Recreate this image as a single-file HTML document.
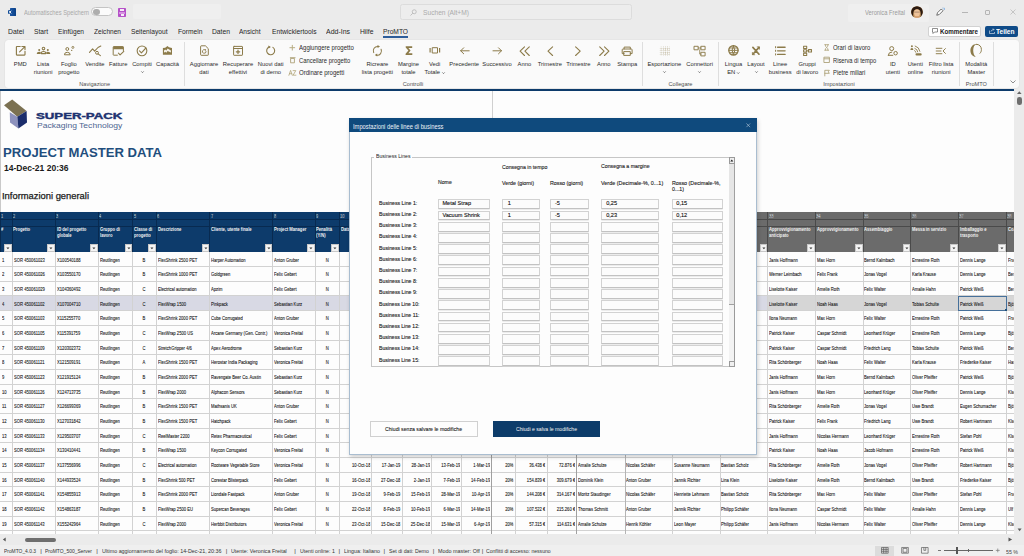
<!DOCTYPE html><html><head><meta charset="utf-8"><style>
*{margin:0;padding:0;box-sizing:border-box}
html,body{width:1024px;height:556px;overflow:hidden;background:#ebebeb}
body{font-family:"Liberation Sans",sans-serif;position:relative;color:#333}
.a{position:absolute}
.t{position:absolute;white-space:nowrap;line-height:1}
.rl{position:absolute;white-space:nowrap;line-height:1;font-size:5.8px;color:#2a2a2a;text-align:center;transform:translateX(-50%)}
.gl{position:absolute;white-space:nowrap;line-height:1;font-size:5.6px;color:#4e4e4e;transform:translateX(-50%)}
.sep{position:absolute;width:1px;background:#dedede;top:42px;height:44px}
svg{position:absolute;overflow:visible}
.c{position:absolute;white-space:nowrap;overflow:hidden;line-height:1.4;height:8px;margin-top:-1px;font-size:5.2px;color:#1a1a1a;-webkit-text-stroke:0.1px #1a1a1a;transform-origin:0 0;transform:scaleX(0.8)}
.hl{position:absolute;white-space:nowrap;overflow:hidden;line-height:1.4;height:8px;margin-top:-1px;font-size:4.9px;color:#f2f2f2;font-weight:bold;transform-origin:0 0;transform:scaleX(0.85)}
</style></head><body><div class="a" style="left:0;top:0;width:1024px;height:40px;background:#ebebeb"></div><div class="a" style="left:9.6px;top:7.9px;width:6.4px;height:8.1px;background:linear-gradient(90deg,#1a56a6,#124a94 60%,#0b3f83);border-radius:0.6px"></div><div class="a" style="left:7.9px;top:9.6px;width:4.6px;height:4.9px;background:#0f4a95;border-radius:0.4px"></div><svg style="left:0;top:0" width="20" height="20"><path d="M9.1 10.7L11.2 13.5M11.2 10.7L9.1 13.5" stroke="#f2f5fa" stroke-width="1.0"/></svg><div class="t fit" style="left:24px;top:9.6px;font-size:6.6px;color:#a8a8a8;transform:scaleX(0.8692);transform-origin:0 0;">Automatisches Speichern</div><div class="a" style="left:91.4px;top:7.3px;width:21.2px;height:9.2px;border:0.8px solid #c4c4c4;border-radius:4.6px;background:#fbfbfb"></div><div class="a" style="left:93.3px;top:8.5px;width:6.6px;height:6.6px;border-radius:50%;background:#adadad"></div><div class="a" style="left:118.1px;top:7.9px;width:8.4px;height:8.8px;background:#b551c8;border-radius:0.8px"></div><div class="a" style="left:120.4px;top:8.9px;width:3.7px;height:1.9px;background:#f6ecf8"></div><div class="a" style="left:119.1px;top:11.6px;width:5.8px;height:2px;background:#d592e0"></div><div class="a" style="left:120.8px;top:13.6px;width:2.9px;height:2.1px;background:#f6ecf8"></div><div class="a" style="left:132.5px;top:3.8px;width:88.5px;height:15px;background:#efefef;border-radius:2px"></div><div class="a" style="left:400px;top:4px;width:232px;height:15.5px;background:#ededed;border:0.8px solid #dcdcdc;border-radius:2.5px"></div><svg style="left:410px;top:9px" width="7" height="7" viewBox="0 0 14 14"><circle cx="8.5" cy="5.5" r="4" fill="none" stroke="#a5a5a5" stroke-width="1.2"/><path d="M5.5 8.5L1 13" stroke="#a5a5a5" stroke-width="1.3"/></svg><div class="t fit" style="left:423px;top:9.5px;font-size:6.6px;color:#ababab;transform:scaleX(1.0079);transform-origin:0 0;">Suchen (Alt+M)</div><div class="a" style="left:848px;top:4px;width:81px;height:17.5px;background:#efefef;border-radius:2px"></div><div class="t fit" style="left:865px;top:9.9px;font-size:6.3px;color:#9a9a9a;transform:scaleX(0.9143);transform-origin:0 0;">Veronica Freital</div><svg style="left:911px;top:6px" width="12" height="12" viewBox="0 0 12 12"><defs><clipPath id="av"><circle cx="6" cy="6" r="5.85"/></clipPath></defs><g clip-path="url(#av)"><rect width="12" height="12" fill="#c89a62"/><path d="M0 12V5C0 1.5 3 0 6 0S12 1.5 12 5V12H9.5C10 9 9.8 6 9 4.5 8 3 4 3 3 4.5 2.2 6 2 9 2.5 12Z" fill="#2b1a10"/><ellipse cx="6" cy="6.9" rx="2.9" ry="3.7" fill="#eec39a"/><path d="M3.3 6.1H8.7" stroke="#6a5040" stroke-width="0.5"/><path d="M2 12C3 10.5 4.5 10.3 6 10.3S9 10.5 10 12Z" fill="#d9a070"/></g></svg><svg style="left:935px;top:7px" width="10" height="10" viewBox="0 0 20 20"><path d="M3.5 16.5l1.5-5 7.5-7.5 3.5 3.5-7.5 7.5z" fill="#fff" stroke="#444" stroke-width="1.5" stroke-linejoin="round"/><circle cx="16" cy="2.2" r="1" fill="#5a9be0"/><circle cx="18.6" cy="2.4" r="1" fill="#5a9be0"/><circle cx="18.4" cy="5" r="1" fill="#5a9be0"/></svg><div class="a" style="left:962px;top:11.8px;width:5.5px;height:0.8px;background:#b5b5b5"></div><div class="a" style="left:985px;top:9.5px;width:5px;height:5px;border:0.8px solid #b5b5b5;border-radius:1px"></div><svg style="left:1010px;top:9.2px" width="6" height="6" viewBox="0 0 12 12"><path d="M1 1L11 11M11 1L1 11" stroke="#b0b0b0" stroke-width="1.3"/></svg><div class="t fit" style="left:7.5px;top:29.2px;font-size:6.9px;color:#262626;transform:scaleX(0.9942);transform-origin:0 0;">Datei</div><div class="t fit" style="left:33.5px;top:29.2px;font-size:6.9px;color:#262626;transform:scaleX(0.9614);transform-origin:0 0;">Start</div><div class="t fit" style="left:57.5px;top:29.2px;font-size:6.9px;color:#262626;transform:scaleX(0.9558);transform-origin:0 0;">Einfügen</div><div class="t fit" style="left:93.5px;top:29.2px;font-size:6.9px;color:#262626;transform:scaleX(0.9521);transform-origin:0 0;">Zeichnen</div><div class="t fit" style="left:131px;top:29.2px;font-size:6.9px;color:#262626;transform:scaleX(0.9621);transform-origin:0 0;">Seitenlayout</div><div class="t fit" style="left:177.5px;top:29.2px;font-size:6.9px;color:#262626;transform:scaleX(0.9691);transform-origin:0 0;">Formeln</div><div class="t fit" style="left:211.5px;top:29.2px;font-size:6.9px;color:#262626;transform:scaleX(0.9788);transform-origin:0 0;">Daten</div><div class="t fit" style="left:239px;top:29.2px;font-size:6.9px;color:#262626;transform:scaleX(0.9509);transform-origin:0 0;">Ansicht</div><div class="t fit" style="left:271.5px;top:29.2px;font-size:6.9px;color:#262626;transform:scaleX(0.9680);transform-origin:0 0;">Entwicklertools</div><div class="t fit" style="left:326px;top:29.2px;font-size:6.9px;color:#262626;transform:scaleX(1.0105);transform-origin:0 0;">Add-Ins</div><div class="t fit" style="left:359.5px;top:29.2px;font-size:6.9px;color:#262626;transform:scaleX(0.9785);transform-origin:0 0;">Hilfe</div><div class="t fit" style="left:383px;top:29.2px;font-size:6.9px;color:#262626;transform:scaleX(0.9644);transform-origin:0 0;">ProMTO</div><div class="a" style="left:383px;top:36.3px;width:25px;height:1.3px;background:#2d5d9a"></div><div class="a" style="left:928.4px;top:25.5px;width:52.6px;height:11.7px;background:#fff;border:1px solid #d2d2d2;border-radius:2px"></div><svg style="left:932px;top:28.3px" width="6" height="6" viewBox="0 0 12 12"><path d="M1 1h10v7H5l-3 3V8H1z" fill="none" stroke="#333" stroke-width="1.1"/></svg><div class="t fit" style="left:939.5px;top:29.3px;font-size:6.7px;color:#222;font-weight:bold;transform:scaleX(0.9293);transform-origin:0 0;">Kommentare</div><div class="a" style="left:985px;top:25.5px;width:33px;height:11.7px;background:#0f4b88;border-radius:2px"></div><svg style="left:988.5px;top:28.3px" width="6" height="6" viewBox="0 0 12 12"><path d="M1 5v6h10V8 M4 7c1-3 3-4 6-4 M8 1l2 2-2 2" fill="none" stroke="#fff" stroke-width="1.1"/></svg><div class="t fit" style="left:995.5px;top:29.3px;font-size:6.7px;color:#fff;font-weight:bold;transform:scaleX(0.9826);transform-origin:0 0;">Teilen</div><div class="a" style="left:4.5px;top:39.6px;width:1014.5px;height:48px;background:#fafafa;border-radius:3.5px;box-shadow:0 0 0 0.6px #e2e2e2"></div><div class="sep" style="left:184.0px"></div><div class="sep" style="left:642.3px"></div><div class="sep" style="left:718.3px"></div><div class="sep" style="left:959.0px"></div><div class="sep" style="left:992.7px"></div><div class="sep" style="left:364px;display:none"></div><div class="rl" style="left:20.3px;top:61.8px">PMD</div><div class="rl" style="left:43.1px;top:61.8px">Lista</div><div class="rl" style="left:43.1px;top:70.1px">riunioni</div><div class="rl" style="left:68.8px;top:61.8px">Foglio</div><div class="rl" style="left:68.8px;top:70.1px">progetto</div><div class="rl" style="left:94.9px;top:61.8px">Vendite</div><div class="rl" style="left:118.2px;top:61.8px">Fatture</div><div class="rl" style="left:142px;top:61.8px">Compiti</div><svg style="left:140.5px;top:71px" width="3" height="2" viewBox="0 0 6 4"><path d="M0.6 0.8L3 3.2L5.4 0.8" fill="none" stroke="#333" stroke-width="1.2"/></svg><div class="rl" style="left:167.5px;top:61.8px">Capacità</div><div class="gl" style="left:94.7px;top:81.6px">Navigazione</div><div class="rl" style="left:204px;top:61.8px">Aggiornare</div><div class="rl" style="left:204px;top:70.1px">dati</div><div class="rl" style="left:238px;top:61.8px">Recuperare</div><div class="rl" style="left:238px;top:70.1px">effettivi</div><div class="rl" style="left:270.7px;top:61.8px">Nuovi dati</div><div class="rl" style="left:270.7px;top:70.1px">di demo</div><div class="t fit" style="left:298.6px;top:45.0px;font-size:6.6px;color:#2a2a2a;transform:scaleX(0.9169);transform-origin:0 0;">Aggiungere progetto</div><div class="t fit" style="left:298.6px;top:57.599999999999994px;font-size:6.6px;color:#2a2a2a;transform:scaleX(0.8895);transform-origin:0 0;">Cancellare progetto</div><div class="t fit" style="left:298.6px;top:70.1px;font-size:6.6px;color:#2a2a2a;transform:scaleX(0.9154);transform-origin:0 0;">Ordinare progetti</div><div class="rl" style="left:377.4px;top:61.8px">Ricreare</div><div class="rl" style="left:377.4px;top:70.1px">lista progetti</div><div class="rl" style="left:408.5px;top:61.8px">Margine</div><div class="rl" style="left:408.5px;top:70.1px">totale</div><div class="rl" style="left:434.6px;top:61.8px">Vedi</div><div class="rl" style="left:434.6px;top:70.1px">Totale<svg style="position:static;display:inline-block;vertical-align:middle;margin-left:1.5px" width="3" height="2" viewBox="0 0 6 4"><path d="M0.6 0.8L3 3.2L5.4 0.8" fill="none" stroke="#333" stroke-width="1.2"/></svg></div><div class="rl" style="left:464.2px;top:61.8px">Precedente</div><div class="rl" style="left:497px;top:61.8px">Successivo</div><div class="rl" style="left:524.4px;top:61.8px">Anno</div><div class="rl" style="left:549.9px;top:61.8px">Trimestre</div><div class="rl" style="left:578.3px;top:61.8px">Trimestre</div><div class="rl" style="left:603.8px;top:61.8px">Anno</div><div class="rl" style="left:627.2px;top:61.8px">Stampa</div><div class="gl" style="left:413px;top:81.6px">Controlli</div><div class="rl" style="left:664.3px;top:61.8px">Esportazione</div><svg style="left:662.8px;top:71px" width="3" height="2" viewBox="0 0 6 4"><path d="M0.6 0.8L3 3.2L5.4 0.8" fill="none" stroke="#333" stroke-width="1.2"/></svg><div class="rl" style="left:699.6px;top:61.8px">Connettori</div><svg style="left:698.1px;top:71px" width="3" height="2" viewBox="0 0 6 4"><path d="M0.6 0.8L3 3.2L5.4 0.8" fill="none" stroke="#333" stroke-width="1.2"/></svg><div class="gl" style="left:680.5px;top:81.6px">Collegare</div><div class="rl" style="left:733.5px;top:61.8px">Lingua</div><div class="rl" style="left:733.5px;top:70.1px">EN<svg style="position:static;display:inline-block;vertical-align:middle;margin-left:1.5px" width="3" height="2" viewBox="0 0 6 4"><path d="M0.6 0.8L3 3.2L5.4 0.8" fill="none" stroke="#333" stroke-width="1.2"/></svg></div><div class="rl" style="left:756px;top:61.8px">Layout</div><svg style="left:754.5px;top:71px" width="3" height="2" viewBox="0 0 6 4"><path d="M0.6 0.8L3 3.2L5.4 0.8" fill="none" stroke="#333" stroke-width="1.2"/></svg><div class="rl" style="left:780.2px;top:61.8px">Linee</div><div class="rl" style="left:780.2px;top:70.1px">business</div><div class="rl" style="left:807.2px;top:61.8px">Gruppi</div><div class="rl" style="left:807.2px;top:70.1px">di lavoro</div><div class="t fit" style="left:832.8px;top:45.0px;font-size:6.6px;color:#2a2a2a;transform:scaleX(0.8981);transform-origin:0 0;">Orari di lavoro</div><div class="t fit" style="left:832.8px;top:57.599999999999994px;font-size:6.6px;color:#2a2a2a;transform:scaleX(0.8730);transform-origin:0 0;">Riserva di tempo</div><div class="t fit" style="left:832.8px;top:70.1px;font-size:6.6px;color:#2a2a2a;transform:scaleX(0.8930);transform-origin:0 0;">Pietre miliari</div><div class="rl" style="left:892.9px;top:61.8px">ID</div><div class="rl" style="left:892.9px;top:70.1px">utenti</div><div class="rl" style="left:915.4px;top:61.8px">Utenti</div><div class="rl" style="left:915.4px;top:70.1px">online</div><div class="rl" style="left:941.2px;top:61.8px">Filtro lista</div><div class="rl" style="left:941.2px;top:70.1px">riunioni</div><div class="gl" style="left:839px;top:81.6px">Impostazioni</div><div class="rl" style="left:976.3px;top:61.8px">Modalità</div><div class="rl" style="left:976.3px;top:70.1px">Master</div><div class="gl" style="left:976.3px;top:81.6px">ProMTO</div><svg style="left:1010px;top:80px" width="6" height="4" viewBox="0 0 12 8"><path d="M1 1l5 5 5-5" fill="none" stroke="#555" stroke-width="1.3"/></svg><svg style="left:0;top:0" width="1024" height="90" viewBox="0 0 1024 90"><path d="M20.2 46.5H16.9Q16.4 46.5 16.4 47V54.6Q16.4 55.1 16.9 55.1H24.5Q25 55.1 25 54.6V51.3" fill="none" stroke="#8c7b4a" stroke-width="1.15" stroke-linecap="round" stroke-linejoin="round" /><path d="M19.6 51.9L24.9 46.6M21.9 46.5H25V49.6" fill="none" stroke="#8c7b4a" stroke-width="1.15" stroke-linecap="round" stroke-linejoin="round" /><circle cx="43.5" cy="48.6" r="1.3" fill="none" stroke="#8c7b4a" stroke-width="1.05"/><path d="M41.3 53.6V53.0Q41.3 51.4 43.5 51.4Q45.7 51.4 45.7 53.0V53.6Z" fill="none" stroke="#8c7b4a" stroke-width="1.05" stroke-linecap="round" stroke-linejoin="round" /><circle cx="39.2" cy="49.9" r="1.0" fill="#8c7b4a"/><circle cx="47.8" cy="49.9" r="1.0" fill="#8c7b4a"/><path d="M36.8 54.1V53.4Q36.8 51.7 39.2 51.7Q40.3 51.7 40.7 52.1V54.1Z" fill="#8c7b4a" /><path d="M50.2 54.1V53.4Q50.2 51.7 47.8 51.7Q46.7 51.7 46.3 52.1V54.1Z" fill="#8c7b4a" /><circle cx="67.3" cy="49.0" r="1.45" fill="none" stroke="#8c7b4a" stroke-width="1.0"/><path d="M64.4 54.4Q64.4 52.3 67.3 52.3Q70.2 52.3 70.2 54.4Z" fill="none" stroke="#8c7b4a" stroke-width="1.0" stroke-linecap="round" stroke-linejoin="round" /><circle cx="72.9" cy="47.4" r="1.0" fill="none" stroke="#8c7b4a" stroke-width="0.9"/><circle cx="71.7" cy="50.4" r="0.65" fill="#8c7b4a"/><path d="M89.5 52.3L92.6 48.9L94.6 51.2L98 47.5L100.8 46.1" fill="none" stroke="#8c7b4a" stroke-width="1.1" stroke-linecap="round" stroke-linejoin="round" /><circle cx="97.0" cy="52.8" r="1.45" fill="none" stroke="#8c7b4a" stroke-width="1.0"/><path d="M98.1 53.9L100.4 55.6" fill="none" stroke="#8c7b4a" stroke-width="1.1" stroke-linecap="round" stroke-linejoin="round" /><path d="M123.4 50.6V47.1Q123.4 46.6 122.9 46.6H113.7Q113.2 46.6 113.2 47.1V54.7Q113.2 55.2 113.7 55.2H117.4" fill="none" stroke="#8c7b4a" stroke-width="1.0" stroke-linecap="round" stroke-linejoin="round" /><path d="M113.2 47.1Q113.2 46.6 113.7 46.6H122.9Q123.4 46.6 123.4 47.1V49.2H113.2Z" fill="#8c7b4a" /><path d="M118.4 53.2L120.1 54.9L123.8 51.3" fill="none" stroke="#8c7b4a" stroke-width="1.1" stroke-linecap="round" stroke-linejoin="round" /><circle cx="142.0" cy="50.85" r="4.85" fill="none" stroke="#8c7b4a" stroke-width="1.1"/><path d="M139.5 50.9L141.4 52.8L145.9 48.0" fill="none" stroke="#8c7b4a" stroke-width="1.1" stroke-linecap="round" stroke-linejoin="round" /><path d="M162.9 54.8V48.0L165.2 47.7L167.5 46.0L168.9 47.3L172.0 48.1V54.8Z" fill="#8c7b4a" /><path d="M164.0 50.6L165.2 49.6L166.3 50.6L167.6 48.5L170.9 50.4V52.6L167.6 50.9L166.3 52.7L165.2 51.7L164.0 52.7Z" fill="#f6f3ea" /><path d="M200.6 46.3Q200.6 45.8 201.1 45.8H205.4L208.3 48.7V54.8Q208.3 55.3 207.8 55.3H201.1Q200.6 55.3 200.6 54.8Z" fill="none" stroke="#8c7b4a" stroke-width="1.0" stroke-linecap="round" stroke-linejoin="round" /><path d="M206.1 51.5A1.85 1.85 0 1 1 205.4 50" fill="none" stroke="#8c7b4a" stroke-width="0.9" stroke-linecap="round" stroke-linejoin="round" /><path d="M204.6 49.1L206.2 49.6L205.5 51.1Z" fill="#8c7b4a" /><path d="M234.1 46.4H242A0.5 0.5 0 0 1 242.5 46.9V54.8A0.5 0.5 0 0 1 242 55.3H234.1A0.5 0.5 0 0 1 233.6 54.8V46.9A0.5 0.5 0 0 1 234.1 46.4Z" fill="none" stroke="#8c7b4a" stroke-width="1.0" stroke-linecap="round" stroke-linejoin="round" /><path d="M233.6 48.5H242.5" fill="none" stroke="#8c7b4a" stroke-width="1.0" stroke-linecap="round" stroke-linejoin="round" /><path d="M238 50.1V53.5M236.3 51.8H239.7" fill="none" stroke="#8c7b4a" stroke-width="1.2" stroke-linecap="round" stroke-linejoin="round" /><path d="M272.9 47.4A4.0 4.0 0 1 1 269.2 47.0" fill="none" stroke="#8c7b4a" stroke-width="1.1" stroke-linecap="round" stroke-linejoin="round" /><path d="M268.3 45.6L270.9 47.1L268.5 48.6Z" fill="#8c7b4a" /><path d="M292.3 45.3V50.1M289.9 47.7H294.7" fill="none" stroke="#b8ad84" stroke-width="1.0" stroke-linecap="round" stroke-linejoin="round" /><path d="M291 58.4H294.4V62.8H291Z M290.3 57.7H295.1" fill="none" stroke="#a99c70" stroke-width="0.85" stroke-linecap="round" stroke-linejoin="round" /><path d="M288.9 75.3L290.6 70.4L292.3 75.3M289.5 73.7H291.7M293.1 70.6H295.8L293.1 75.2H295.9" fill="none" stroke="#b3a67a" stroke-width="0.8" stroke-linecap="round" stroke-linejoin="round" /><path d="M373.7 52.6A4.3 4.3 0 0 1 378.0 46.5" fill="none" stroke="#8c7b4a" stroke-width="1.05" stroke-linecap="round" stroke-linejoin="round" /><path d="M377.5 45.1L380.0 46.6L377.6 48.0Z" fill="#8c7b4a" /><path d="M381.1 49.3A4.3 4.3 0 0 1 376.7 55.3" fill="none" stroke="#8c7b4a" stroke-width="1.05" stroke-linecap="round" stroke-linejoin="round" /><path d="M377.3 56.5L374.8 55.0L377.2 53.6Z" fill="#8c7b4a" /><path d="M405.7 46.3H412.2V47.9H408.4L410.6 50.6L408.4 53.3H412.3V54.9H405.6V53.8L408.4 50.6L405.7 47.5Z" fill="#8c7b4a" /><path d="M432.6 47.7H437.5V53.0H432.6Z" fill="none" stroke="#8c7b4a" stroke-width="1.0" stroke-linecap="round" stroke-linejoin="round" /><path d="M429.5 48.1H430.7V52.5H429.5Z" fill="#8c7b4a" /><path d="M439.0 48.1H440.2V52.5H439.0Z" fill="#8c7b4a" /><path d="M469.2 50.8H460.7M463.7 47.8L460.7 50.8L463.7 53.8" fill="none" stroke="#8c7b4a" stroke-width="1.0" stroke-linecap="round" stroke-linejoin="round" /><path d="M493.0 50.8H501.5M498.5 47.8L501.5 50.8L498.5 53.8" fill="none" stroke="#8c7b4a" stroke-width="1.0" stroke-linecap="round" stroke-linejoin="round" /><path d="M524.5 46.9L520.1 51.2L524.5 55.5M529.3 46.9L524.9 51.2L529.3 55.5" fill="none" stroke="#8c7b4a" stroke-width="1.1" stroke-linecap="round" stroke-linejoin="round" /><path d="M552.6 46.9L548.0 51.2L552.6 55.5" fill="none" stroke="#8c7b4a" stroke-width="1.1" stroke-linecap="round" stroke-linejoin="round" /><path d="M575.6 46.9L580.2 51.2L575.6 55.5" fill="none" stroke="#8c7b4a" stroke-width="1.1" stroke-linecap="round" stroke-linejoin="round" /><path d="M599.7 46.9L604.1 51.2L599.7 55.5M604.5 46.9L608.9 51.2L604.5 55.5" fill="none" stroke="#8c7b4a" stroke-width="1.1" stroke-linecap="round" stroke-linejoin="round" /><path d="M624.1 48.9V47.1H630.3V48.9M624.1 53.6H622.2V49.8Q622.2 49 623 49H631.3Q632.1 49 632.1 49.8V53.6H630.3M624.1 51.6H630.3V55.4H624.1Z" fill="none" stroke="#8c7b4a" stroke-width="1.0" stroke-linecap="round" stroke-linejoin="round" /><path d="M661.2 46.6V56" stroke="#8c7b4a" stroke-width="0.55" stroke-dasharray="0.6 0.75" opacity="0.5"/><path d="M663.3 46.6V56" stroke="#8c7b4a" stroke-width="0.55" stroke-dasharray="0.6 0.75" opacity="0.9"/><path d="M665.4 46.6V56" stroke="#8c7b4a" stroke-width="0.55" stroke-dasharray="0.6 0.75" opacity="0.9"/><path d="M667.5 46.6V56" stroke="#8c7b4a" stroke-width="0.55" stroke-dasharray="0.6 0.75" opacity="0.9"/><path d="M669.3 46.6V56" stroke="#8c7b4a" stroke-width="0.55" stroke-dasharray="0.6 0.75" opacity="0.5"/><path d="M659.9 48.4H670.1" stroke="#8c7b4a" stroke-width="0.55" stroke-dasharray="0.6 0.75" opacity="0.6"/><path d="M659.9 50.5H670.1" stroke="#8c7b4a" stroke-width="0.55" stroke-dasharray="0.6 0.75" opacity="0.6"/><path d="M659.9 52.6H670.1" stroke="#8c7b4a" stroke-width="0.55" stroke-dasharray="0.6 0.75" opacity="0.6"/><path d="M659.9 54.6H670.1" stroke="#8c7b4a" stroke-width="0.55" stroke-dasharray="0.6 0.75" opacity="0.6"/><path d="M694.4 46.3H698.2V49.8H694.4Z M701.2 46.3H705.1V49.8H701.2Z M701.2 52.3H705.1V55.9H701.2Z" fill="none" stroke="#8c7b4a" stroke-width="0.95" stroke-linecap="round" stroke-linejoin="round" /><path d="M698.2 48.0H701.2M699.7 49.8V54.1H701.2" fill="none" stroke="#8c7b4a" stroke-width="0.8" stroke-linecap="round" stroke-linejoin="round" /><circle cx="733.45" cy="50.35" r="4.65" fill="none" stroke="#8c7b4a" stroke-width="1.45"/><path d="M733.45 45.8Q730.6 50.35 733.45 54.9Q736.3 50.35 733.45 45.8Z" fill="none" stroke="#8c7b4a" stroke-width="1.0" stroke-linecap="round" stroke-linejoin="round" /><path d="M729.0 50.35H737.9M729.7 48.0H737.2M729.7 52.7H737.2" fill="none" stroke="#8c7b4a" stroke-width="0.95" stroke-linecap="round" stroke-linejoin="round" /><path d="M752.9 47.4L759.0 54.2M759.0 47.4L752.9 54.2" fill="none" stroke="#8c7b4a" stroke-width="1.7" stroke-linecap="round" stroke-linejoin="round" /><path d="M757.2 46.9H759.5V49.2M754.7 54.7H752.4V52.4" fill="none" stroke="#8c7b4a" stroke-width="0.8" stroke-linecap="round" stroke-linejoin="round" /><path d="M777.6 47.2H785.1M777.6 50.8H785.1M777.6 54.4H785.1" fill="none" stroke="#8c7b4a" stroke-width="1.35" stroke-linecap="round" stroke-linejoin="round" /><path d="M775.6 46.6V47.8M775.6 50.2V51.4M775.6 53.8V55.0" fill="none" stroke="#8c7b4a" stroke-width="1.0" stroke-linecap="round" stroke-linejoin="round" /><path d="M803.6 46.3H806.7V48.5H803.6Z M803.6 49.7H806.7V52.0H803.6Z M803.6 53.2H806.7V55.5H803.6Z M808.5 49.6H811.5V52.0H808.5Z" fill="none" stroke="#8c7b4a" stroke-width="1.05" stroke-linecap="round" stroke-linejoin="round" /><path d="M806.7 50.8H808.5" fill="none" stroke="#8c7b4a" stroke-width="0.9" stroke-linecap="round" stroke-linejoin="round" /><path d="M824.7 44.7H828.6M824.7 50.2H828.6M825.3 44.8Q825.3 46.8 826.65 47.45Q828.0 48.1 828.0 50.1M828.0 44.8Q828.0 46.8 826.65 47.45Q825.3 48.1 825.3 50.1" fill="none" stroke="#a99d72" stroke-width="0.75" stroke-linecap="round" stroke-linejoin="round" /><path d="M824.3 57.2H829.4V62.5H824.3Z M824.3 58.8H829.4" fill="none" stroke="#a99d72" stroke-width="0.85" stroke-linecap="round" stroke-linejoin="round" /><path d="M824.8 75.9V70.3H829.3L828.3 71.8L829.3 73.3H824.8" fill="none" stroke="#a99d72" stroke-width="0.85" stroke-linecap="round" stroke-linejoin="round" /><circle cx="891.7" cy="48.6" r="2.0" fill="none" stroke="#8c7b4a" stroke-width="1.0"/><path d="M888.3 55.3Q888.3 52.0 891.8 52.0M888.3 55.3H892.8" fill="none" stroke="#8c7b4a" stroke-width="1.0" stroke-linecap="round" stroke-linejoin="round" /><circle cx="895.6" cy="53.2" r="1.75" fill="none" stroke="#8c7b4a" stroke-width="1.0"/><circle cx="911.9" cy="46.2" r="0.95" fill="#8c7b4a"/><path d="M910.4 50.0Q910.4 48.0 911.9 48.0Q913.4 48.0 913.4 50.0Z" fill="#8c7b4a" /><path d="M915.2 46.0Q919.2 47.0 919.9 51.3M914.9 48.4Q917.4 49.1 917.7 51.8M914.6 50.6Q915.7 51.0 915.8 52.2" fill="none" stroke="#8c7b4a" stroke-width="0.9" stroke-linecap="round" stroke-linejoin="round" /><path d="M916.6 53.3H920.6A1.1 1.1 0 0 1 920.6 55.5H916.6A1.1 1.1 0 0 1 916.6 53.3Z" fill="#8c7b4a" /><path d="M936.2 48.3H941.9M936.2 51.0H941.0M936.2 53.7H941.9M945.4 48.6L943.0 51.0L945.4 53.4" fill="none" stroke="#8c7b4a" stroke-width="0.95" stroke-linecap="round" stroke-linejoin="round" /><path d="M976.6 43.9C972.8 43.9 970.4 46.8 970.4 50.5C970.4 54.3 972.8 56.8 975.8 56.8C974.1 55.6 973.2 53.3 973.2 50.3C973.2 46.9 974.6 44.7 976.6 44.6Z" fill="#8c7b4a" /><path d="M976.4 44.25C979.5 44.25 981.4 46.6 981.4 49.5C981.4 51.2 980.9 52.4 980.0 53.3" fill="none" stroke="#8c7b4a" stroke-width="1.0" stroke-linecap="round" stroke-linejoin="round" /></svg><div class="a" style="left:0;top:89px;width:1014px;height:2px;background:#0d3b6b"></div><div class="a" style="left:0;top:91px;width:1014px;height:443px;background:#fdfdfd"></div><div class="a" style="left:0;top:91px;width:1px;height:443px;background:#c9c9c9"></div><svg style="left:3px;top:99px" width="26" height="31" viewBox="0 0 26 31">
<path d="M1 6.2L9.2 0.5L23.6 12L14.3 17.8z" fill="#7b7152"/>
<path d="M6.8 13.2L14.3 17.8L15.4 29.6L7 23.5z" fill="#8d92bd"/>
<path d="M14.3 17.8L23.6 12L24 23.5L15.4 29.6z" fill="#1b2d6b"/>
</svg><div class="t fit" style="left:36px;top:111.8px;font-size:8.8px;color:#1d3270;font-weight:bold;transform:scaleX(1.5005);transform-origin:0 0;-webkit-text-stroke:0.4px #1d3270;">SUPER-PACK</div><div class="t fit" style="left:36.7px;top:122.0px;font-size:7px;color:#4d6591;transform:scaleX(1.2199);transform-origin:0 0;">Packaging Technology</div><div class="t fit" style="left:2.6px;top:146.3px;font-size:13.5px;color:#1f4e7d;font-weight:bold;transform:scaleX(0.9715);transform-origin:0 0;">PROJECT MASTER DATA</div><div class="t fit" style="left:4.4px;top:164.4px;font-size:8.6px;color:#1a1a1a;font-weight:bold;transform:scaleX(0.9925);transform-origin:0 0;">14-Dec-21 20:36</div><div class="t fit" style="left:1.8px;top:192.0px;font-size:9px;color:#1a1a1a;transform:scaleX(1.0413);transform-origin:0 0;-webkit-text-stroke:0.25px #1a1a1a;">Informazioni generali</div><div class="a" style="left:0px;top:212px;width:12px;height:39.69999999999999px;background:#0d3b6b;border-left:0.7px solid #082a50"></div><div class="a" style="left:0px;top:219px;width:12px;height:0.8px;background:#082a50"></div><div class="a" style="left:0px;top:226.3px;width:12px;height:0.8px;background:#082a50"></div><div class="c" style="left:1.2px;top:214.4px;color:#e6ecf3;font-size:5.3px">1</div><div class="hl" style="left:1.3px;top:228.3px;width:11.76px">#</div><div class="a" style="left:4.2px;top:243.5px;width:7.8px;height:8.2px;background:#f4f4f4;border:0.5px solid #c8c8c8"></div><svg style="left:4.2px;top:243.5px" width="8" height="8"><path d="M2.4 3.6H5.4L3.9 5.2Z" fill="#333"/></svg><div class="a" style="left:12px;top:212px;width:43.2px;height:39.69999999999999px;background:#0d3b6b;border-left:0.7px solid #082a50"></div><div class="a" style="left:12px;top:219px;width:43.2px;height:0.8px;background:#082a50"></div><div class="a" style="left:12px;top:226.3px;width:43.2px;height:0.8px;background:#082a50"></div><div class="c" style="left:13.2px;top:214.4px;color:#e6ecf3;font-size:5.3px">2</div><div class="hl" style="left:13.3px;top:228.3px;width:48.47px">Progetto</div><div class="a" style="left:47.400000000000006px;top:243.5px;width:7.8px;height:8.2px;background:#f4f4f4;border:0.5px solid #c8c8c8"></div><svg style="left:47.400000000000006px;top:243.5px" width="8" height="8"><path d="M2.4 3.6H5.4L3.9 5.2Z" fill="#333"/></svg><div class="a" style="left:55.2px;top:212px;width:43.0px;height:39.69999999999999px;background:#0d3b6b;border-left:0.7px solid #082a50"></div><div class="a" style="left:55.2px;top:219px;width:43.0px;height:0.8px;background:#082a50"></div><div class="a" style="left:55.2px;top:226.3px;width:43.0px;height:0.8px;background:#082a50"></div><div class="c" style="left:56.400000000000006px;top:214.4px;color:#e6ecf3;font-size:5.3px">3</div><div class="hl" style="left:56.5px;top:228.3px;width:48.24px">ID del progetto</div><div class="hl" style="left:56.5px;top:234.3px;width:48.24px">globale</div><div class="a" style="left:90.4px;top:243.5px;width:7.8px;height:8.2px;background:#f4f4f4;border:0.5px solid #c8c8c8"></div><svg style="left:90.4px;top:243.5px" width="8" height="8"><path d="M2.4 3.6H5.4L3.9 5.2Z" fill="#333"/></svg><div class="a" style="left:98.2px;top:212px;width:34.2px;height:39.69999999999999px;background:#0d3b6b;border-left:0.7px solid #082a50"></div><div class="a" style="left:98.2px;top:219px;width:34.2px;height:0.8px;background:#082a50"></div><div class="a" style="left:98.2px;top:226.3px;width:34.2px;height:0.8px;background:#082a50"></div><div class="c" style="left:99.4px;top:214.4px;color:#e6ecf3;font-size:5.3px">4</div><div class="hl" style="left:99.5px;top:228.3px;width:37.88px">Gruppo di</div><div class="hl" style="left:99.5px;top:234.3px;width:37.88px">lavoro</div><div class="a" style="left:124.60000000000001px;top:243.5px;width:7.8px;height:8.2px;background:#f4f4f4;border:0.5px solid #c8c8c8"></div><svg style="left:124.60000000000001px;top:243.5px" width="8" height="8"><path d="M2.4 3.6H5.4L3.9 5.2Z" fill="#333"/></svg><div class="a" style="left:132.4px;top:212px;width:23.799999999999983px;height:39.69999999999999px;background:#0d3b6b;border-left:0.7px solid #082a50"></div><div class="a" style="left:132.4px;top:219px;width:23.799999999999983px;height:0.8px;background:#082a50"></div><div class="a" style="left:132.4px;top:226.3px;width:23.799999999999983px;height:0.8px;background:#082a50"></div><div class="c" style="left:133.6px;top:214.4px;color:#e6ecf3;font-size:5.3px">5</div><div class="hl" style="left:133.70000000000002px;top:228.3px;width:25.65px">Classe di</div><div class="hl" style="left:133.70000000000002px;top:234.3px;width:25.65px">progetto</div><div class="a" style="left:148.39999999999998px;top:243.5px;width:7.8px;height:8.2px;background:#f4f4f4;border:0.5px solid #c8c8c8"></div><svg style="left:148.39999999999998px;top:243.5px" width="8" height="8"><path d="M2.4 3.6H5.4L3.9 5.2Z" fill="#333"/></svg><div class="a" style="left:156.2px;top:212px;width:53.10000000000002px;height:39.69999999999999px;background:#0d3b6b;border-left:0.7px solid #082a50"></div><div class="a" style="left:156.2px;top:219px;width:53.10000000000002px;height:0.8px;background:#082a50"></div><div class="a" style="left:156.2px;top:226.3px;width:53.10000000000002px;height:0.8px;background:#082a50"></div><div class="c" style="left:157.39999999999998px;top:214.4px;color:#e6ecf3;font-size:5.3px">6</div><div class="hl" style="left:157.5px;top:228.3px;width:60.12px">Descrizione</div><div class="a" style="left:201.5px;top:243.5px;width:7.8px;height:8.2px;background:#f4f4f4;border:0.5px solid #c8c8c8"></div><svg style="left:201.5px;top:243.5px" width="8" height="8"><path d="M2.4 3.6H5.4L3.9 5.2Z" fill="#333"/></svg><div class="a" style="left:209.3px;top:212px;width:63.099999999999966px;height:39.69999999999999px;background:#0d3b6b;border-left:0.7px solid #082a50"></div><div class="a" style="left:209.3px;top:219px;width:63.099999999999966px;height:0.8px;background:#082a50"></div><div class="a" style="left:209.3px;top:226.3px;width:63.099999999999966px;height:0.8px;background:#082a50"></div><div class="c" style="left:210.5px;top:214.4px;color:#e6ecf3;font-size:5.3px">7</div><div class="hl" style="left:210.60000000000002px;top:228.3px;width:71.88px">Cliente, utente finale</div><div class="a" style="left:264.59999999999997px;top:243.5px;width:7.8px;height:8.2px;background:#f4f4f4;border:0.5px solid #c8c8c8"></div><svg style="left:264.59999999999997px;top:243.5px" width="8" height="8"><path d="M2.4 3.6H5.4L3.9 5.2Z" fill="#333"/></svg><div class="a" style="left:272.4px;top:212px;width:42.5px;height:39.69999999999999px;background:#0d3b6b;border-left:0.7px solid #082a50"></div><div class="a" style="left:272.4px;top:219px;width:42.5px;height:0.8px;background:#082a50"></div><div class="a" style="left:272.4px;top:226.3px;width:42.5px;height:0.8px;background:#082a50"></div><div class="c" style="left:273.59999999999997px;top:214.4px;color:#e6ecf3;font-size:5.3px">8</div><div class="hl" style="left:273.7px;top:228.3px;width:47.65px">Project Manager</div><div class="a" style="left:307.09999999999997px;top:243.5px;width:7.8px;height:8.2px;background:#f4f4f4;border:0.5px solid #c8c8c8"></div><svg style="left:307.09999999999997px;top:243.5px" width="8" height="8"><path d="M2.4 3.6H5.4L3.9 5.2Z" fill="#333"/></svg><div class="a" style="left:314.9px;top:212px;width:24.30000000000001px;height:39.69999999999999px;background:#0d3b6b;border-left:0.7px solid #082a50"></div><div class="a" style="left:314.9px;top:219px;width:24.30000000000001px;height:0.8px;background:#082a50"></div><div class="a" style="left:314.9px;top:226.3px;width:24.30000000000001px;height:0.8px;background:#082a50"></div><div class="c" style="left:316.09999999999997px;top:214.4px;color:#e6ecf3;font-size:5.3px">9</div><div class="hl" style="left:316.2px;top:228.3px;width:26.24px">Penalità</div><div class="hl" style="left:316.2px;top:234.3px;width:26.24px">(Y/N)</div><div class="a" style="left:331.4px;top:243.5px;width:7.8px;height:8.2px;background:#f4f4f4;border:0.5px solid #c8c8c8"></div><svg style="left:331.4px;top:243.5px" width="8" height="8"><path d="M2.4 3.6H5.4L3.9 5.2Z" fill="#333"/></svg><div class="a" style="left:339.2px;top:212px;width:32.19999999999999px;height:39.69999999999999px;background:#0d3b6b;border-left:0.7px solid #082a50"></div><div class="a" style="left:339.2px;top:219px;width:32.19999999999999px;height:0.8px;background:#082a50"></div><div class="a" style="left:339.2px;top:226.3px;width:32.19999999999999px;height:0.8px;background:#082a50"></div><div class="c" style="left:340.4px;top:214.4px;color:#e6ecf3;font-size:5.3px">10</div><div class="hl" style="left:340.5px;top:228.3px;width:35.53px">Data...</div><div class="a" style="left:363.59999999999997px;top:243.5px;width:7.8px;height:8.2px;background:#f4f4f4;border:0.5px solid #c8c8c8"></div><svg style="left:363.59999999999997px;top:243.5px" width="8" height="8"><path d="M2.4 3.6H5.4L3.9 5.2Z" fill="#333"/></svg><div class="a" style="left:371.4px;top:212px;width:30.100000000000023px;height:39.69999999999999px;background:#0d3b6b;border-left:0.7px solid #082a50"></div><div class="a" style="left:371.4px;top:219px;width:30.100000000000023px;height:0.8px;background:#082a50"></div><div class="a" style="left:371.4px;top:226.3px;width:30.100000000000023px;height:0.8px;background:#082a50"></div><div class="a" style="left:393.7px;top:243.5px;width:7.8px;height:8.2px;background:#f4f4f4;border:0.5px solid #c8c8c8"></div><svg style="left:393.7px;top:243.5px" width="8" height="8"><path d="M2.4 3.6H5.4L3.9 5.2Z" fill="#333"/></svg><div class="a" style="left:401.5px;top:212px;width:29.899999999999977px;height:39.69999999999999px;background:#0d3b6b;border-left:0.7px solid #082a50"></div><div class="a" style="left:401.5px;top:219px;width:29.899999999999977px;height:0.8px;background:#082a50"></div><div class="a" style="left:401.5px;top:226.3px;width:29.899999999999977px;height:0.8px;background:#082a50"></div><div class="a" style="left:423.59999999999997px;top:243.5px;width:7.8px;height:8.2px;background:#f4f4f4;border:0.5px solid #c8c8c8"></div><svg style="left:423.59999999999997px;top:243.5px" width="8" height="8"><path d="M2.4 3.6H5.4L3.9 5.2Z" fill="#333"/></svg><div class="a" style="left:431.4px;top:212px;width:30.0px;height:39.69999999999999px;background:#0d3b6b;border-left:0.7px solid #082a50"></div><div class="a" style="left:431.4px;top:219px;width:30.0px;height:0.8px;background:#082a50"></div><div class="a" style="left:431.4px;top:226.3px;width:30.0px;height:0.8px;background:#082a50"></div><div class="a" style="left:453.59999999999997px;top:243.5px;width:7.8px;height:8.2px;background:#f4f4f4;border:0.5px solid #c8c8c8"></div><svg style="left:453.59999999999997px;top:243.5px" width="8" height="8"><path d="M2.4 3.6H5.4L3.9 5.2Z" fill="#333"/></svg><div class="a" style="left:461.4px;top:212px;width:29.900000000000034px;height:39.69999999999999px;background:#0d3b6b;border-left:0.7px solid #082a50"></div><div class="a" style="left:461.4px;top:219px;width:29.900000000000034px;height:0.8px;background:#082a50"></div><div class="a" style="left:461.4px;top:226.3px;width:29.900000000000034px;height:0.8px;background:#082a50"></div><div class="a" style="left:483.5px;top:243.5px;width:7.8px;height:8.2px;background:#f4f4f4;border:0.5px solid #c8c8c8"></div><svg style="left:483.5px;top:243.5px" width="8" height="8"><path d="M2.4 3.6H5.4L3.9 5.2Z" fill="#333"/></svg><div class="a" style="left:491.3px;top:212px;width:23.19999999999999px;height:39.69999999999999px;background:#0d3b6b;border-left:0.7px solid #082a50"></div><div class="a" style="left:491.3px;top:219px;width:23.19999999999999px;height:0.8px;background:#082a50"></div><div class="a" style="left:491.3px;top:226.3px;width:23.19999999999999px;height:0.8px;background:#082a50"></div><div class="a" style="left:506.7px;top:243.5px;width:7.8px;height:8.2px;background:#f4f4f4;border:0.5px solid #c8c8c8"></div><svg style="left:506.7px;top:243.5px" width="8" height="8"><path d="M2.4 3.6H5.4L3.9 5.2Z" fill="#333"/></svg><div class="a" style="left:514.5px;top:212px;width:32.0px;height:39.69999999999999px;background:#0d3b6b;border-left:0.7px solid #082a50"></div><div class="a" style="left:514.5px;top:219px;width:32.0px;height:0.8px;background:#082a50"></div><div class="a" style="left:514.5px;top:226.3px;width:32.0px;height:0.8px;background:#082a50"></div><div class="a" style="left:538.7px;top:243.5px;width:7.8px;height:8.2px;background:#f4f4f4;border:0.5px solid #c8c8c8"></div><svg style="left:538.7px;top:243.5px" width="8" height="8"><path d="M2.4 3.6H5.4L3.9 5.2Z" fill="#333"/></svg><div class="a" style="left:546.5px;top:212px;width:29.899999999999977px;height:39.69999999999999px;background:#0d3b6b;border-left:0.7px solid #082a50"></div><div class="a" style="left:546.5px;top:219px;width:29.899999999999977px;height:0.8px;background:#082a50"></div><div class="a" style="left:546.5px;top:226.3px;width:29.899999999999977px;height:0.8px;background:#082a50"></div><div class="a" style="left:568.6px;top:243.5px;width:7.8px;height:8.2px;background:#f4f4f4;border:0.5px solid #c8c8c8"></div><svg style="left:568.6px;top:243.5px" width="8" height="8"><path d="M2.4 3.6H5.4L3.9 5.2Z" fill="#333"/></svg><div class="a" style="left:576.4px;top:212px;width:48.200000000000045px;height:39.69999999999999px;background:#6b6b6b;border-left:0.7px solid #4a4a4a"></div><div class="a" style="left:576.4px;top:219px;width:48.200000000000045px;height:0.8px;background:#4a4a4a"></div><div class="a" style="left:576.4px;top:226.3px;width:48.200000000000045px;height:0.8px;background:#4a4a4a"></div><div class="a" style="left:616.8000000000001px;top:243.5px;width:7.8px;height:8.2px;background:#f4f4f4;border:0.5px solid #c8c8c8"></div><svg style="left:616.8000000000001px;top:243.5px" width="8" height="8"><path d="M2.4 3.6H5.4L3.9 5.2Z" fill="#333"/></svg><div class="a" style="left:624.6px;top:212px;width:47.39999999999998px;height:39.69999999999999px;background:#6b6b6b;border-left:0.7px solid #4a4a4a"></div><div class="a" style="left:624.6px;top:219px;width:47.39999999999998px;height:0.8px;background:#4a4a4a"></div><div class="a" style="left:624.6px;top:226.3px;width:47.39999999999998px;height:0.8px;background:#4a4a4a"></div><div class="a" style="left:664.2px;top:243.5px;width:7.8px;height:8.2px;background:#f4f4f4;border:0.5px solid #c8c8c8"></div><svg style="left:664.2px;top:243.5px" width="8" height="8"><path d="M2.4 3.6H5.4L3.9 5.2Z" fill="#333"/></svg><div class="a" style="left:672px;top:212px;width:47.60000000000002px;height:39.69999999999999px;background:#6b6b6b;border-left:0.7px solid #4a4a4a"></div><div class="a" style="left:672px;top:219px;width:47.60000000000002px;height:0.8px;background:#4a4a4a"></div><div class="a" style="left:672px;top:226.3px;width:47.60000000000002px;height:0.8px;background:#4a4a4a"></div><div class="a" style="left:711.8000000000001px;top:243.5px;width:7.8px;height:8.2px;background:#f4f4f4;border:0.5px solid #c8c8c8"></div><svg style="left:711.8000000000001px;top:243.5px" width="8" height="8"><path d="M2.4 3.6H5.4L3.9 5.2Z" fill="#333"/></svg><div class="a" style="left:719.6px;top:212px;width:47.69999999999993px;height:39.69999999999999px;background:#6b6b6b;border-left:0.7px solid #4a4a4a"></div><div class="a" style="left:719.6px;top:219px;width:47.69999999999993px;height:0.8px;background:#4a4a4a"></div><div class="a" style="left:719.6px;top:226.3px;width:47.69999999999993px;height:0.8px;background:#4a4a4a"></div><div class="c" style="left:720.8000000000001px;top:214.4px;color:#e6ecf3;font-size:5.3px">32</div><div class="a" style="left:759.5px;top:243.5px;width:7.8px;height:8.2px;background:#f4f4f4;border:0.5px solid #c8c8c8"></div><svg style="left:759.5px;top:243.5px" width="8" height="8"><path d="M2.4 3.6H5.4L3.9 5.2Z" fill="#333"/></svg><div class="a" style="left:767.3px;top:212px;width:47.90000000000009px;height:39.69999999999999px;background:#6b6b6b;border-left:0.7px solid #4a4a4a"></div><div class="a" style="left:767.3px;top:219px;width:47.90000000000009px;height:0.8px;background:#4a4a4a"></div><div class="a" style="left:767.3px;top:226.3px;width:47.90000000000009px;height:0.8px;background:#4a4a4a"></div><div class="c" style="left:768.5px;top:214.4px;color:#e6ecf3;font-size:5.3px">33</div><div class="hl" style="left:768.5999999999999px;top:228.3px;width:54.00px">Approvvigionamento</div><div class="hl" style="left:768.5999999999999px;top:234.3px;width:54.00px">anticipato</div><div class="a" style="left:807.4000000000001px;top:243.5px;width:7.8px;height:8.2px;background:#f4f4f4;border:0.5px solid #c8c8c8"></div><svg style="left:807.4000000000001px;top:243.5px" width="8" height="8"><path d="M2.4 3.6H5.4L3.9 5.2Z" fill="#333"/></svg><div class="a" style="left:815.2px;top:212px;width:47.39999999999998px;height:39.69999999999999px;background:#6b6b6b;border-left:0.7px solid #4a4a4a"></div><div class="a" style="left:815.2px;top:219px;width:47.39999999999998px;height:0.8px;background:#4a4a4a"></div><div class="a" style="left:815.2px;top:226.3px;width:47.39999999999998px;height:0.8px;background:#4a4a4a"></div><div class="c" style="left:816.4000000000001px;top:214.4px;color:#e6ecf3;font-size:5.3px">34</div><div class="hl" style="left:816.5px;top:228.3px;width:53.41px">Approvvigionamento</div><div class="a" style="left:854.8000000000001px;top:243.5px;width:7.8px;height:8.2px;background:#f4f4f4;border:0.5px solid #c8c8c8"></div><svg style="left:854.8000000000001px;top:243.5px" width="8" height="8"><path d="M2.4 3.6H5.4L3.9 5.2Z" fill="#333"/></svg><div class="a" style="left:862.6px;top:212px;width:47.69999999999993px;height:39.69999999999999px;background:#6b6b6b;border-left:0.7px solid #4a4a4a"></div><div class="a" style="left:862.6px;top:219px;width:47.69999999999993px;height:0.8px;background:#4a4a4a"></div><div class="a" style="left:862.6px;top:226.3px;width:47.69999999999993px;height:0.8px;background:#4a4a4a"></div><div class="c" style="left:863.8000000000001px;top:214.4px;color:#e6ecf3;font-size:5.3px">35</div><div class="hl" style="left:863.9px;top:228.3px;width:53.76px">Assembiaggio</div><div class="a" style="left:902.5px;top:243.5px;width:7.8px;height:8.2px;background:#f4f4f4;border:0.5px solid #c8c8c8"></div><svg style="left:902.5px;top:243.5px" width="8" height="8"><path d="M2.4 3.6H5.4L3.9 5.2Z" fill="#333"/></svg><div class="a" style="left:910.3px;top:212px;width:47.90000000000009px;height:39.69999999999999px;background:#6b6b6b;border-left:0.7px solid #4a4a4a"></div><div class="a" style="left:910.3px;top:219px;width:47.90000000000009px;height:0.8px;background:#4a4a4a"></div><div class="a" style="left:910.3px;top:226.3px;width:47.90000000000009px;height:0.8px;background:#4a4a4a"></div><div class="c" style="left:911.5px;top:214.4px;color:#e6ecf3;font-size:5.3px">36</div><div class="hl" style="left:911.5999999999999px;top:228.3px;width:54.00px">Messa in servizio</div><div class="a" style="left:950.4000000000001px;top:243.5px;width:7.8px;height:8.2px;background:#f4f4f4;border:0.5px solid #c8c8c8"></div><svg style="left:950.4000000000001px;top:243.5px" width="8" height="8"><path d="M2.4 3.6H5.4L3.9 5.2Z" fill="#333"/></svg><div class="a" style="left:958.2px;top:212px;width:48.0px;height:39.69999999999999px;background:#6b6b6b;border-left:0.7px solid #4a4a4a"></div><div class="a" style="left:958.2px;top:219px;width:48.0px;height:0.8px;background:#4a4a4a"></div><div class="a" style="left:958.2px;top:226.3px;width:48.0px;height:0.8px;background:#4a4a4a"></div><div class="c" style="left:959.4000000000001px;top:214.4px;color:#e6ecf3;font-size:5.3px">37</div><div class="hl" style="left:959.5px;top:228.3px;width:54.12px">Imballaggio e</div><div class="hl" style="left:959.5px;top:234.3px;width:54.12px">trasporto</div><div class="a" style="left:998.4000000000001px;top:243.5px;width:7.8px;height:8.2px;background:#f4f4f4;border:0.5px solid #c8c8c8"></div><svg style="left:998.4000000000001px;top:243.5px" width="8" height="8"><path d="M2.4 3.6H5.4L3.9 5.2Z" fill="#333"/></svg><div class="a" style="left:1006.2px;top:212px;width:7.7999999999999545px;height:39.69999999999999px;background:#6b6b6b;border-left:0.7px solid #4a4a4a"></div><div class="a" style="left:1006.2px;top:219px;width:7.7999999999999545px;height:0.8px;background:#4a4a4a"></div><div class="a" style="left:1006.2px;top:226.3px;width:7.7999999999999545px;height:0.8px;background:#4a4a4a"></div><div class="c" style="left:1007.4000000000001px;top:214.4px;color:#e6ecf3;font-size:5.3px">38</div><div class="hl" style="left:1007.5px;top:228.3px;width:6.82px">Co...</div><div class="a" style="left:0;top:251.7px;width:1014px;height:14.685px;background:#fdfdfd"></div><div class="c" style="left:1.6px;top:257.5px;width:12.50px">1</div><div class="c" style="left:13.6px;top:257.5px;width:51.50px">SOR 450061023</div><div class="c" style="left:56.800000000000004px;top:257.5px;width:51.25px">X100540188</div><div class="c" style="left:99.8px;top:257.5px;width:40.25px">Reutlingen</div><div class="c" style="left:132.4px;top:257.5px;width:29.75px;text-align:center">B</div><div class="c" style="left:157.79999999999998px;top:257.5px;width:63.88px">FlexShrink 2500 PET</div><div class="c" style="left:210.9px;top:257.5px;width:76.37px">Harper Automation</div><div class="c" style="left:274.0px;top:257.5px;width:50.62px">Anton Gruber</div><div class="c" style="left:314.9px;top:257.5px;width:30.38px;text-align:center">N</div><div class="c" style="left:768.9px;top:257.5px;width:57.38px">Janis Hoffmann</div><div class="c" style="left:816.8000000000001px;top:257.5px;width:56.75px">Max Horn</div><div class="c" style="left:864.2px;top:257.5px;width:57.12px">Bernd Kalmbach</div><div class="c" style="left:911.9px;top:257.5px;width:57.38px">Ernestine Roth</div><div class="c" style="left:959.8000000000001px;top:257.5px;width:57.50px">Dennis Lange</div><div class="c" style="left:1007.8000000000001px;top:257.5px;width:7.25px">Franz</div><div class="a" style="left:0;top:266.385px;width:1014px;height:14.685px;background:#fdfdfd"></div><div class="c" style="left:1.6px;top:272.185px;width:12.50px">2</div><div class="c" style="left:13.6px;top:272.185px;width:51.50px">SOR 450061026</div><div class="c" style="left:56.800000000000004px;top:272.185px;width:51.25px">X103550170</div><div class="c" style="left:99.8px;top:272.185px;width:40.25px">Reutlingen</div><div class="c" style="left:132.4px;top:272.185px;width:29.75px;text-align:center">B</div><div class="c" style="left:157.79999999999998px;top:272.185px;width:63.88px">FlexShrink 1000 PET</div><div class="c" style="left:210.9px;top:272.185px;width:76.37px">Goldgreen</div><div class="c" style="left:274.0px;top:272.185px;width:50.62px">Felix Gebert</div><div class="c" style="left:314.9px;top:272.185px;width:30.38px;text-align:center">N</div><div class="c" style="left:768.9px;top:272.185px;width:57.38px">Werner Leimbach</div><div class="c" style="left:816.8000000000001px;top:272.185px;width:56.75px">Felix Frank</div><div class="c" style="left:864.2px;top:272.185px;width:57.12px">Jonas Vogel</div><div class="c" style="left:911.9px;top:272.185px;width:57.38px">Karla Krause</div><div class="c" style="left:959.8000000000001px;top:272.185px;width:57.50px">Dennis Lange</div><div class="c" style="left:1007.8000000000001px;top:272.185px;width:7.25px">Bernd</div><div class="a" style="left:0;top:281.07px;width:1014px;height:14.685px;background:#fdfdfd"></div><div class="c" style="left:1.6px;top:286.87px;width:12.50px">3</div><div class="c" style="left:13.6px;top:286.87px;width:51.50px">SOR 450061029</div><div class="c" style="left:56.800000000000004px;top:286.87px;width:51.25px">X104360492</div><div class="c" style="left:99.8px;top:286.87px;width:40.25px">Reutlingen</div><div class="c" style="left:132.4px;top:286.87px;width:29.75px;text-align:center">C</div><div class="c" style="left:157.79999999999998px;top:286.87px;width:63.88px">Electrical automation</div><div class="c" style="left:210.9px;top:286.87px;width:76.37px">Apzim</div><div class="c" style="left:274.0px;top:286.87px;width:50.62px">Felix Gebert</div><div class="c" style="left:314.9px;top:286.87px;width:30.38px;text-align:center">N</div><div class="c" style="left:768.9px;top:286.87px;width:57.38px">Liselotte Kaiser</div><div class="c" style="left:816.8000000000001px;top:286.87px;width:56.75px">Amelie Roth</div><div class="c" style="left:864.2px;top:286.87px;width:57.12px">Felix Walter</div><div class="c" style="left:911.9px;top:286.87px;width:57.38px">Amalie Hahn</div><div class="c" style="left:959.8000000000001px;top:286.87px;width:57.50px">Patrick Weiß</div><div class="c" style="left:1007.8000000000001px;top:286.87px;width:7.25px">Bernd</div><div class="a" style="left:0;top:295.755px;width:1014px;height:14.685px;background:#d8d9e4"></div><div class="a" style="left:767.3px;top:295.755px;width:246.7px;height:14.685px;background:#d6d6d6"></div><div class="c" style="left:1.6px;top:301.555px;width:12.50px">4</div><div class="c" style="left:13.6px;top:301.555px;width:51.50px">SOR 450061102</div><div class="c" style="left:56.800000000000004px;top:301.555px;width:51.25px">X107004710</div><div class="c" style="left:99.8px;top:301.555px;width:40.25px">Reutlingen</div><div class="c" style="left:132.4px;top:301.555px;width:29.75px;text-align:center">C</div><div class="c" style="left:157.79999999999998px;top:301.555px;width:63.88px">FlexWrap 1500</div><div class="c" style="left:210.9px;top:301.555px;width:76.37px">Pinkpack</div><div class="c" style="left:274.0px;top:301.555px;width:50.62px">Sebastian Kurz</div><div class="c" style="left:314.9px;top:301.555px;width:30.38px;text-align:center">N</div><div class="c" style="left:768.9px;top:301.555px;width:57.38px">Liselotte Kaiser</div><div class="c" style="left:816.8000000000001px;top:301.555px;width:56.75px">Noah Haas</div><div class="c" style="left:864.2px;top:301.555px;width:57.12px">Jonas Vogel</div><div class="c" style="left:911.9px;top:301.555px;width:57.38px">Tobias Schulte</div><div class="c" style="left:959.8000000000001px;top:301.555px;width:57.50px">Patrick Weiß</div><div class="c" style="left:1007.8000000000001px;top:301.555px;width:7.25px">Björn</div><div class="a" style="left:0;top:310.44px;width:1014px;height:14.685px;background:#fdfdfd"></div><div class="c" style="left:1.6px;top:316.24px;width:12.50px">5</div><div class="c" style="left:13.6px;top:316.24px;width:51.50px">SOR 450061103</div><div class="c" style="left:56.800000000000004px;top:316.24px;width:51.25px">X115255770</div><div class="c" style="left:99.8px;top:316.24px;width:40.25px">Reutlingen</div><div class="c" style="left:132.4px;top:316.24px;width:29.75px;text-align:center">B</div><div class="c" style="left:157.79999999999998px;top:316.24px;width:63.88px">FlexShrink 2000 PET</div><div class="c" style="left:210.9px;top:316.24px;width:76.37px">Cube Corrugated</div><div class="c" style="left:274.0px;top:316.24px;width:50.62px">Anton Gruber</div><div class="c" style="left:314.9px;top:316.24px;width:30.38px;text-align:center">N</div><div class="c" style="left:768.9px;top:316.24px;width:57.38px">Ilona Neumann</div><div class="c" style="left:816.8000000000001px;top:316.24px;width:56.75px">Max Horn</div><div class="c" style="left:864.2px;top:316.24px;width:57.12px">Felix Walter</div><div class="c" style="left:911.9px;top:316.24px;width:57.38px">Ernestine Roth</div><div class="c" style="left:959.8000000000001px;top:316.24px;width:57.50px">Patrick Weiß</div><div class="c" style="left:1007.8000000000001px;top:316.24px;width:7.25px">Franz</div><div class="a" style="left:0;top:325.125px;width:1014px;height:14.685px;background:#fdfdfd"></div><div class="c" style="left:1.6px;top:330.925px;width:12.50px">6</div><div class="c" style="left:13.6px;top:330.925px;width:51.50px">SOR 450061105</div><div class="c" style="left:56.800000000000004px;top:330.925px;width:51.25px">X115391759</div><div class="c" style="left:99.8px;top:330.925px;width:40.25px">Reutlingen</div><div class="c" style="left:132.4px;top:330.925px;width:29.75px;text-align:center">C</div><div class="c" style="left:157.79999999999998px;top:330.925px;width:63.88px">FlexWrap 2500 US</div><div class="c" style="left:210.9px;top:330.925px;width:76.37px">Arcane Germany (Gen. Contr.)</div><div class="c" style="left:274.0px;top:330.925px;width:50.62px">Veronica Freital</div><div class="c" style="left:314.9px;top:330.925px;width:30.38px;text-align:center">N</div><div class="c" style="left:768.9px;top:330.925px;width:57.38px">Patrick Kaiser</div><div class="c" style="left:816.8000000000001px;top:330.925px;width:56.75px">Caspar Schmidt</div><div class="c" style="left:864.2px;top:330.925px;width:57.12px">Leonhard Krüger</div><div class="c" style="left:911.9px;top:330.925px;width:57.38px">Ernestine Roth</div><div class="c" style="left:959.8000000000001px;top:330.925px;width:57.50px">Dennis Lange</div><div class="c" style="left:1007.8000000000001px;top:330.925px;width:7.25px">Björn</div><div class="a" style="left:0;top:339.81px;width:1014px;height:14.685px;background:#fdfdfd"></div><div class="c" style="left:1.6px;top:345.61px;width:12.50px">7</div><div class="c" style="left:13.6px;top:345.61px;width:51.50px">SOR 450061109</div><div class="c" style="left:56.800000000000004px;top:345.61px;width:51.25px">X120302372</div><div class="c" style="left:99.8px;top:345.61px;width:40.25px">Reutlingen</div><div class="c" style="left:132.4px;top:345.61px;width:29.75px;text-align:center">C</div><div class="c" style="left:157.79999999999998px;top:345.61px;width:63.88px">StretchGripper 4/6</div><div class="c" style="left:210.9px;top:345.61px;width:76.37px">Apex Aerodrome</div><div class="c" style="left:274.0px;top:345.61px;width:50.62px">Sebastian Kurz</div><div class="c" style="left:314.9px;top:345.61px;width:30.38px;text-align:center">N</div><div class="c" style="left:768.9px;top:345.61px;width:57.38px">Patrick Kaiser</div><div class="c" style="left:816.8000000000001px;top:345.61px;width:56.75px">Caspar Schmidt</div><div class="c" style="left:864.2px;top:345.61px;width:57.12px">Friedrich Lang</div><div class="c" style="left:911.9px;top:345.61px;width:57.38px">Tobias Schulte</div><div class="c" style="left:959.8000000000001px;top:345.61px;width:57.50px">Patrick Weiß</div><div class="c" style="left:1007.8000000000001px;top:345.61px;width:7.25px">Bernd</div><div class="a" style="left:0;top:354.495px;width:1014px;height:14.685px;background:#fdfdfd"></div><div class="c" style="left:1.6px;top:360.295px;width:12.50px">8</div><div class="c" style="left:13.6px;top:360.295px;width:51.50px">SOR 450061121</div><div class="c" style="left:56.800000000000004px;top:360.295px;width:51.25px">X121509191</div><div class="c" style="left:99.8px;top:360.295px;width:40.25px">Reutlingen</div><div class="c" style="left:132.4px;top:360.295px;width:29.75px;text-align:center">A</div><div class="c" style="left:157.79999999999998px;top:360.295px;width:63.88px">FlexShrink 1500 PET</div><div class="c" style="left:210.9px;top:360.295px;width:76.37px">Herostar India Packaging</div><div class="c" style="left:274.0px;top:360.295px;width:50.62px">Veronica Freital</div><div class="c" style="left:314.9px;top:360.295px;width:30.38px;text-align:center">N</div><div class="c" style="left:768.9px;top:360.295px;width:57.38px">Rita Schönberger</div><div class="c" style="left:816.8000000000001px;top:360.295px;width:56.75px">Noah Haas</div><div class="c" style="left:864.2px;top:360.295px;width:57.12px">Felix Walter</div><div class="c" style="left:911.9px;top:360.295px;width:57.38px">Karla Krause</div><div class="c" style="left:959.8000000000001px;top:360.295px;width:57.50px">Friederike Kaiser</div><div class="c" style="left:1007.8000000000001px;top:360.295px;width:7.25px">Hans</div><div class="a" style="left:0;top:369.18px;width:1014px;height:14.685px;background:#fdfdfd"></div><div class="c" style="left:1.6px;top:374.98px;width:12.50px">9</div><div class="c" style="left:13.6px;top:374.98px;width:51.50px">SOR 450061123</div><div class="c" style="left:56.800000000000004px;top:374.98px;width:51.25px">X121915124</div><div class="c" style="left:99.8px;top:374.98px;width:40.25px">Reutlingen</div><div class="c" style="left:132.4px;top:374.98px;width:29.75px;text-align:center">B</div><div class="c" style="left:157.79999999999998px;top:374.98px;width:63.88px">FlexShrink 2000 PET</div><div class="c" style="left:210.9px;top:374.98px;width:76.37px">Ravengate Beer Co. Austin</div><div class="c" style="left:274.0px;top:374.98px;width:50.62px">Sebastian Kurz</div><div class="c" style="left:314.9px;top:374.98px;width:30.38px;text-align:center">N</div><div class="c" style="left:768.9px;top:374.98px;width:57.38px">Janis Hoffmann</div><div class="c" style="left:816.8000000000001px;top:374.98px;width:56.75px">Max Horn</div><div class="c" style="left:864.2px;top:374.98px;width:57.12px">Bernd Kalmbach</div><div class="c" style="left:911.9px;top:374.98px;width:57.38px">Oliver Pfeiffer</div><div class="c" style="left:959.8000000000001px;top:374.98px;width:57.50px">Patrick Weiß</div><div class="c" style="left:1007.8000000000001px;top:374.98px;width:7.25px">Björn</div><div class="a" style="left:0;top:383.865px;width:1014px;height:14.685px;background:#fdfdfd"></div><div class="c" style="left:1.6px;top:389.665px;width:12.50px">10</div><div class="c" style="left:13.6px;top:389.665px;width:51.50px">SOR 450061126</div><div class="c" style="left:56.800000000000004px;top:389.665px;width:51.25px">X124713735</div><div class="c" style="left:99.8px;top:389.665px;width:40.25px">Reutlingen</div><div class="c" style="left:132.4px;top:389.665px;width:29.75px;text-align:center">B</div><div class="c" style="left:157.79999999999998px;top:389.665px;width:63.88px">FlexWrap 2000</div><div class="c" style="left:210.9px;top:389.665px;width:76.37px">Alphacon Sensors</div><div class="c" style="left:274.0px;top:389.665px;width:50.62px">Sebastian Kurz</div><div class="c" style="left:314.9px;top:389.665px;width:30.38px;text-align:center">N</div><div class="c" style="left:768.9px;top:389.665px;width:57.38px">Janis Hoffmann</div><div class="c" style="left:816.8000000000001px;top:389.665px;width:56.75px">Max Horn</div><div class="c" style="left:864.2px;top:389.665px;width:57.12px">Leonhard Krüger</div><div class="c" style="left:911.9px;top:389.665px;width:57.38px">Oliver Pfeiffer</div><div class="c" style="left:959.8000000000001px;top:389.665px;width:57.50px">Dennis Lange</div><div class="c" style="left:1007.8000000000001px;top:389.665px;width:7.25px">Klaus</div><div class="a" style="left:0;top:398.54999999999995px;width:1014px;height:14.685px;background:#fdfdfd"></div><div class="c" style="left:1.6px;top:404.34999999999997px;width:12.50px">11</div><div class="c" style="left:13.6px;top:404.34999999999997px;width:51.50px">SOR 450061127</div><div class="c" style="left:56.800000000000004px;top:404.34999999999997px;width:51.25px">X126699369</div><div class="c" style="left:99.8px;top:404.34999999999997px;width:40.25px">Reutlingen</div><div class="c" style="left:132.4px;top:404.34999999999997px;width:29.75px;text-align:center">B</div><div class="c" style="left:157.79999999999998px;top:404.34999999999997px;width:63.88px">FlexShrink 1500 PET</div><div class="c" style="left:210.9px;top:404.34999999999997px;width:76.37px">Mathsanis UK</div><div class="c" style="left:274.0px;top:404.34999999999997px;width:50.62px">Anton Gruber</div><div class="c" style="left:314.9px;top:404.34999999999997px;width:30.38px;text-align:center">N</div><div class="c" style="left:768.9px;top:404.34999999999997px;width:57.38px">Rita Schönberger</div><div class="c" style="left:816.8000000000001px;top:404.34999999999997px;width:56.75px">Amelie Roth</div><div class="c" style="left:864.2px;top:404.34999999999997px;width:57.12px">Jonas Vogel</div><div class="c" style="left:911.9px;top:404.34999999999997px;width:57.38px">Uwe Brandt</div><div class="c" style="left:959.8000000000001px;top:404.34999999999997px;width:57.50px">Eugen Schumacher</div><div class="c" style="left:1007.8000000000001px;top:404.34999999999997px;width:7.25px">Björn</div><div class="a" style="left:0;top:413.235px;width:1014px;height:14.685px;background:#fdfdfd"></div><div class="c" style="left:1.6px;top:419.035px;width:12.50px">12</div><div class="c" style="left:13.6px;top:419.035px;width:51.50px">SOR 450061130</div><div class="c" style="left:56.800000000000004px;top:419.035px;width:51.25px">X127031842</div><div class="c" style="left:99.8px;top:419.035px;width:40.25px">Reutlingen</div><div class="c" style="left:132.4px;top:419.035px;width:29.75px;text-align:center">B</div><div class="c" style="left:157.79999999999998px;top:419.035px;width:63.88px">FlexShrink 1500 PET</div><div class="c" style="left:210.9px;top:419.035px;width:76.37px">Hatchpack</div><div class="c" style="left:274.0px;top:419.035px;width:50.62px">Felix Gebert</div><div class="c" style="left:314.9px;top:419.035px;width:30.38px;text-align:center">N</div><div class="c" style="left:768.9px;top:419.035px;width:57.38px">Patrick Kaiser</div><div class="c" style="left:816.8000000000001px;top:419.035px;width:56.75px">Felix Frank</div><div class="c" style="left:864.2px;top:419.035px;width:57.12px">Friedrich Lang</div><div class="c" style="left:911.9px;top:419.035px;width:57.38px">Uwe Brandt</div><div class="c" style="left:959.8000000000001px;top:419.035px;width:57.50px">Robert Hartmann</div><div class="c" style="left:1007.8000000000001px;top:419.035px;width:7.25px">Klaus</div><div class="a" style="left:0;top:427.91999999999996px;width:1014px;height:14.685px;background:#fdfdfd"></div><div class="c" style="left:1.6px;top:433.71999999999997px;width:12.50px">13</div><div class="c" style="left:13.6px;top:433.71999999999997px;width:51.50px">SOR 450061133</div><div class="c" style="left:56.800000000000004px;top:433.71999999999997px;width:51.25px">X129503707</div><div class="c" style="left:99.8px;top:433.71999999999997px;width:40.25px">Reutlingen</div><div class="c" style="left:132.4px;top:433.71999999999997px;width:29.75px;text-align:center">C</div><div class="c" style="left:157.79999999999998px;top:433.71999999999997px;width:63.88px">ReelMaster 2200</div><div class="c" style="left:210.9px;top:433.71999999999997px;width:76.37px">Retex Pharmaceutical</div><div class="c" style="left:274.0px;top:433.71999999999997px;width:50.62px">Felix Gebert</div><div class="c" style="left:314.9px;top:433.71999999999997px;width:30.38px;text-align:center">N</div><div class="c" style="left:768.9px;top:433.71999999999997px;width:57.38px">Janis Hoffmann</div><div class="c" style="left:816.8000000000001px;top:433.71999999999997px;width:56.75px">Nicolas Hermann</div><div class="c" style="left:864.2px;top:433.71999999999997px;width:57.12px">Leonhard Krüger</div><div class="c" style="left:911.9px;top:433.71999999999997px;width:57.38px">Ernestine Roth</div><div class="c" style="left:959.8000000000001px;top:433.71999999999997px;width:57.50px">Stefan Pohl</div><div class="c" style="left:1007.8000000000001px;top:433.71999999999997px;width:7.25px">Klaus</div><div class="a" style="left:0;top:442.605px;width:1014px;height:14.685px;background:#fdfdfd"></div><div class="c" style="left:1.6px;top:448.40500000000003px;width:12.50px">14</div><div class="c" style="left:13.6px;top:448.40500000000003px;width:51.50px">SOR 450061134</div><div class="c" style="left:56.800000000000004px;top:448.40500000000003px;width:51.25px">X130410441</div><div class="c" style="left:99.8px;top:448.40500000000003px;width:40.25px">Reutlingen</div><div class="c" style="left:132.4px;top:448.40500000000003px;width:29.75px;text-align:center">B</div><div class="c" style="left:157.79999999999998px;top:448.40500000000003px;width:63.88px">FlexWrap 1500</div><div class="c" style="left:210.9px;top:448.40500000000003px;width:76.37px">Keycon Corrugated</div><div class="c" style="left:274.0px;top:448.40500000000003px;width:50.62px">Veronica Freital</div><div class="c" style="left:314.9px;top:448.40500000000003px;width:30.38px;text-align:center">N</div><div class="c" style="left:768.9px;top:448.40500000000003px;width:57.38px">Patrick Kaiser</div><div class="c" style="left:816.8000000000001px;top:448.40500000000003px;width:56.75px">Noah Haas</div><div class="c" style="left:864.2px;top:448.40500000000003px;width:57.12px">Jacob Hofmann</div><div class="c" style="left:911.9px;top:448.40500000000003px;width:57.38px">Ernestine Roth</div><div class="c" style="left:959.8000000000001px;top:448.40500000000003px;width:57.50px">Patrick Weiß</div><div class="c" style="left:1007.8000000000001px;top:448.40500000000003px;width:7.25px">Klaus</div><div class="a" style="left:0;top:457.28999999999996px;width:1014px;height:14.685px;background:#fdfdfd"></div><div class="c" style="left:1.6px;top:463.09px;width:12.50px">15</div><div class="c" style="left:13.6px;top:463.09px;width:51.50px">SOR 450061137</div><div class="c" style="left:56.800000000000004px;top:463.09px;width:51.25px">X137556996</div><div class="c" style="left:99.8px;top:463.09px;width:40.25px">Reutlingen</div><div class="c" style="left:132.4px;top:463.09px;width:29.75px;text-align:center">C</div><div class="c" style="left:157.79999999999998px;top:463.09px;width:63.88px">Electrical automation</div><div class="c" style="left:210.9px;top:463.09px;width:76.37px">Rootware Vegetable Store</div><div class="c" style="left:274.0px;top:463.09px;width:50.62px">Veronica Freital</div><div class="c" style="left:314.9px;top:463.09px;width:30.38px;text-align:center">N</div><div class="c" style="left:339.7px;top:463.09px;width:38.12px;text-align:right">10-Oct-18</div><div class="c" style="left:371.9px;top:463.09px;width:35.50px;text-align:right">17-Jan-19</div><div class="c" style="left:402.0px;top:463.09px;width:35.25px;text-align:right">28-Jan-19</div><div class="c" style="left:431.9px;top:463.09px;width:35.38px;text-align:right">13-Feb-19</div><div class="c" style="left:461.9px;top:463.09px;width:35.25px;text-align:right">1-Mar-19</div><div class="c" style="left:491.8px;top:463.09px;width:26.87px;text-align:right">20%</div><div class="c" style="left:515.0px;top:463.09px;width:37.88px;text-align:right">36.438 €</div><div class="c" style="left:547.0px;top:463.09px;width:35.25px;text-align:right">72.876 €</div><div class="c" style="left:578.0px;top:463.09px;width:57.75px">Amalie Schulze</div><div class="c" style="left:626.2px;top:463.09px;width:56.75px">Nicolas Schäfer</div><div class="c" style="left:673.6px;top:463.09px;width:57.00px">Susanne Neumann</div><div class="c" style="left:721.2px;top:463.09px;width:57.12px">Bastian Scholz</div><div class="c" style="left:768.9px;top:463.09px;width:57.38px">Rita Schönberger</div><div class="c" style="left:816.8000000000001px;top:463.09px;width:56.75px">Amelie Roth</div><div class="c" style="left:864.2px;top:463.09px;width:57.12px">Jonas Vogel</div><div class="c" style="left:911.9px;top:463.09px;width:57.38px">Oliver Pfeiffer</div><div class="c" style="left:959.8000000000001px;top:463.09px;width:57.50px">Robert Hartmann</div><div class="c" style="left:1007.8000000000001px;top:463.09px;width:7.25px">Björn</div><div class="a" style="left:0;top:471.975px;width:1014px;height:14.685px;background:#fdfdfd"></div><div class="c" style="left:1.6px;top:477.77500000000003px;width:12.50px">16</div><div class="c" style="left:13.6px;top:477.77500000000003px;width:51.50px">SOR 450061140</div><div class="c" style="left:56.800000000000004px;top:477.77500000000003px;width:51.25px">X144933524</div><div class="c" style="left:99.8px;top:477.77500000000003px;width:40.25px">Reutlingen</div><div class="c" style="left:132.4px;top:477.77500000000003px;width:29.75px;text-align:center">B</div><div class="c" style="left:157.79999999999998px;top:477.77500000000003px;width:63.88px">FlexShrink 500 PET</div><div class="c" style="left:210.9px;top:477.77500000000003px;width:76.37px">Corestar Blisterpack</div><div class="c" style="left:274.0px;top:477.77500000000003px;width:50.62px">Felix Gebert</div><div class="c" style="left:314.9px;top:477.77500000000003px;width:30.38px;text-align:center">N</div><div class="c" style="left:339.7px;top:477.77500000000003px;width:38.12px;text-align:right">16-Oct-18</div><div class="c" style="left:371.9px;top:477.77500000000003px;width:35.50px;text-align:right">27-Dec-18</div><div class="c" style="left:402.0px;top:477.77500000000003px;width:35.25px;text-align:right">2-Jan-19</div><div class="c" style="left:431.9px;top:477.77500000000003px;width:35.38px;text-align:right">7-Feb-19</div><div class="c" style="left:461.9px;top:477.77500000000003px;width:35.25px;text-align:right">14-Feb-19</div><div class="c" style="left:491.8px;top:477.77500000000003px;width:26.87px;text-align:right">20%</div><div class="c" style="left:515.0px;top:477.77500000000003px;width:37.88px;text-align:right">154.839 €</div><div class="c" style="left:547.0px;top:477.77500000000003px;width:35.25px;text-align:right">309.679 €</div><div class="c" style="left:578.0px;top:477.77500000000003px;width:57.75px">Dominik Klein</div><div class="c" style="left:626.2px;top:477.77500000000003px;width:56.75px">Anton Gruber</div><div class="c" style="left:673.6px;top:477.77500000000003px;width:57.00px">Jannik Richter</div><div class="c" style="left:721.2px;top:477.77500000000003px;width:57.12px">Lina Klein</div><div class="c" style="left:768.9px;top:477.77500000000003px;width:57.38px">Liselotte Kaiser</div><div class="c" style="left:816.8000000000001px;top:477.77500000000003px;width:56.75px">Amelie Roth</div><div class="c" style="left:864.2px;top:477.77500000000003px;width:57.12px">Bernd Kalmbach</div><div class="c" style="left:911.9px;top:477.77500000000003px;width:57.38px">Uwe Brandt</div><div class="c" style="left:959.8000000000001px;top:477.77500000000003px;width:57.50px">Friederike Kaiser</div><div class="c" style="left:1007.8000000000001px;top:477.77500000000003px;width:7.25px">Björn</div><div class="a" style="left:0;top:486.65999999999997px;width:1014px;height:14.685px;background:#fdfdfd"></div><div class="c" style="left:1.6px;top:492.46px;width:12.50px">17</div><div class="c" style="left:13.6px;top:492.46px;width:51.50px">SOR 450061141</div><div class="c" style="left:56.800000000000004px;top:492.46px;width:51.25px">X154855913</div><div class="c" style="left:99.8px;top:492.46px;width:40.25px">Reutlingen</div><div class="c" style="left:132.4px;top:492.46px;width:29.75px;text-align:center">B</div><div class="c" style="left:157.79999999999998px;top:492.46px;width:63.88px">FlexShrink 2000 PET</div><div class="c" style="left:210.9px;top:492.46px;width:76.37px">Liondale Fastpack</div><div class="c" style="left:274.0px;top:492.46px;width:50.62px">Anton Gruber</div><div class="c" style="left:314.9px;top:492.46px;width:30.38px;text-align:center">N</div><div class="c" style="left:339.7px;top:492.46px;width:38.12px;text-align:right">19-Oct-18</div><div class="c" style="left:371.9px;top:492.46px;width:35.50px;text-align:right">9-Feb-19</div><div class="c" style="left:402.0px;top:492.46px;width:35.25px;text-align:right">15-Feb-19</div><div class="c" style="left:431.9px;top:492.46px;width:35.38px;text-align:right">28-Mar-19</div><div class="c" style="left:461.9px;top:492.46px;width:35.25px;text-align:right">10-Apr-19</div><div class="c" style="left:491.8px;top:492.46px;width:26.87px;text-align:right">20%</div><div class="c" style="left:515.0px;top:492.46px;width:37.88px;text-align:right">144.208 €</div><div class="c" style="left:547.0px;top:492.46px;width:35.25px;text-align:right">314.167 €</div><div class="c" style="left:578.0px;top:492.46px;width:57.75px">Moritz Staudinger</div><div class="c" style="left:626.2px;top:492.46px;width:56.75px">Nicolas Schäfer</div><div class="c" style="left:673.6px;top:492.46px;width:57.00px">Henriette Lehmann</div><div class="c" style="left:721.2px;top:492.46px;width:57.12px">Bastian Scholz</div><div class="c" style="left:768.9px;top:492.46px;width:57.38px">Rita Schönberger</div><div class="c" style="left:816.8000000000001px;top:492.46px;width:56.75px">Max Horn</div><div class="c" style="left:864.2px;top:492.46px;width:57.12px">Felix Walter</div><div class="c" style="left:911.9px;top:492.46px;width:57.38px">Oliver Pfeiffer</div><div class="c" style="left:959.8000000000001px;top:492.46px;width:57.50px">Stefan Pohl</div><div class="c" style="left:1007.8000000000001px;top:492.46px;width:7.25px">Franz</div><div class="a" style="left:0;top:501.345px;width:1014px;height:14.685px;background:#fdfdfd"></div><div class="c" style="left:1.6px;top:507.14500000000004px;width:12.50px">18</div><div class="c" style="left:13.6px;top:507.14500000000004px;width:51.50px">SOR 450061142</div><div class="c" style="left:56.800000000000004px;top:507.14500000000004px;width:51.25px">X154863187</div><div class="c" style="left:99.8px;top:507.14500000000004px;width:40.25px">Reutlingen</div><div class="c" style="left:132.4px;top:507.14500000000004px;width:29.75px;text-align:center">B</div><div class="c" style="left:157.79999999999998px;top:507.14500000000004px;width:63.88px">FlexWrap 2500 EU</div><div class="c" style="left:210.9px;top:507.14500000000004px;width:76.37px">Supercan Beverages</div><div class="c" style="left:274.0px;top:507.14500000000004px;width:50.62px">Felix Gebert</div><div class="c" style="left:314.9px;top:507.14500000000004px;width:30.38px;text-align:center">N</div><div class="c" style="left:339.7px;top:507.14500000000004px;width:38.12px;text-align:right">22-Oct-18</div><div class="c" style="left:371.9px;top:507.14500000000004px;width:35.50px;text-align:right">8-Feb-19</div><div class="c" style="left:402.0px;top:507.14500000000004px;width:35.25px;text-align:right">10-Feb-19</div><div class="c" style="left:431.9px;top:507.14500000000004px;width:35.38px;text-align:right">6-Mar-19</div><div class="c" style="left:461.9px;top:507.14500000000004px;width:35.25px;text-align:right">14-Mar-19</div><div class="c" style="left:491.8px;top:507.14500000000004px;width:26.87px;text-align:right">20%</div><div class="c" style="left:515.0px;top:507.14500000000004px;width:37.88px;text-align:right">107.522 €</div><div class="c" style="left:547.0px;top:507.14500000000004px;width:35.25px;text-align:right">215.260 €</div><div class="c" style="left:578.0px;top:507.14500000000004px;width:57.75px">Thomas Schmitt</div><div class="c" style="left:626.2px;top:507.14500000000004px;width:56.75px">Anton Gruber</div><div class="c" style="left:673.6px;top:507.14500000000004px;width:57.00px">Jannik Richter</div><div class="c" style="left:721.2px;top:507.14500000000004px;width:57.12px">Philipp Schäfer</div><div class="c" style="left:768.9px;top:507.14500000000004px;width:57.38px">Ilona Neumann</div><div class="c" style="left:816.8000000000001px;top:507.14500000000004px;width:56.75px">Caspar Schmidt</div><div class="c" style="left:864.2px;top:507.14500000000004px;width:57.12px">Felix Walter</div><div class="c" style="left:911.9px;top:507.14500000000004px;width:57.38px">Amalie Hahn</div><div class="c" style="left:959.8000000000001px;top:507.14500000000004px;width:57.50px">Dennis Lange</div><div class="c" style="left:1007.8000000000001px;top:507.14500000000004px;width:7.25px">Ulf B</div><div class="a" style="left:0;top:516.03px;width:1014px;height:14.685px;background:#fdfdfd"></div><div class="c" style="left:1.6px;top:521.8299999999999px;width:12.50px">19</div><div class="c" style="left:13.6px;top:521.8299999999999px;width:51.50px">SOR 450061143</div><div class="c" style="left:56.800000000000004px;top:521.8299999999999px;width:51.25px">X155242964</div><div class="c" style="left:99.8px;top:521.8299999999999px;width:40.25px">Reutlingen</div><div class="c" style="left:132.4px;top:521.8299999999999px;width:29.75px;text-align:center">C</div><div class="c" style="left:157.79999999999998px;top:521.8299999999999px;width:63.88px">FlexWrap 2000</div><div class="c" style="left:210.9px;top:521.8299999999999px;width:76.37px">Herbbit Distributors</div><div class="c" style="left:274.0px;top:521.8299999999999px;width:50.62px">Veronica Freital</div><div class="c" style="left:314.9px;top:521.8299999999999px;width:30.38px;text-align:center">N</div><div class="c" style="left:339.7px;top:521.8299999999999px;width:38.12px;text-align:right">23-Oct-18</div><div class="c" style="left:371.9px;top:521.8299999999999px;width:35.50px;text-align:right">15-Dec-18</div><div class="c" style="left:402.0px;top:521.8299999999999px;width:35.25px;text-align:right">25-Dec-18</div><div class="c" style="left:431.9px;top:521.8299999999999px;width:35.38px;text-align:right">15-Mar-19</div><div class="c" style="left:461.9px;top:521.8299999999999px;width:35.25px;text-align:right">6-Apr-19</div><div class="c" style="left:491.8px;top:521.8299999999999px;width:26.87px;text-align:right">20%</div><div class="c" style="left:515.0px;top:521.8299999999999px;width:37.88px;text-align:right">57.315 €</div><div class="c" style="left:547.0px;top:521.8299999999999px;width:35.25px;text-align:right">114.631 €</div><div class="c" style="left:578.0px;top:521.8299999999999px;width:57.75px">Amalie Schulze</div><div class="c" style="left:626.2px;top:521.8299999999999px;width:56.75px">Henrik Köhler</div><div class="c" style="left:673.6px;top:521.8299999999999px;width:57.00px">Leon Mayer</div><div class="c" style="left:721.2px;top:521.8299999999999px;width:57.12px">Philipp Schäfer</div><div class="c" style="left:768.9px;top:521.8299999999999px;width:57.38px">Janis Hoffmann</div><div class="c" style="left:816.8000000000001px;top:521.8299999999999px;width:56.75px">Nicolas Hermann</div><div class="c" style="left:864.2px;top:521.8299999999999px;width:57.12px">Felix Walter</div><div class="c" style="left:911.9px;top:521.8299999999999px;width:57.38px">Oliver Pfeiffer</div><div class="c" style="left:959.8000000000001px;top:521.8299999999999px;width:57.50px">Dennis Lange</div><div class="c" style="left:1007.8000000000001px;top:521.8299999999999px;width:7.25px">Klaus</div><div class="a" style="left:0;top:530.7149999999999px;width:1014px;height:3.285000000000082px;background:#fdfdfd"></div><div class="a" style="left:0;top:266.08px;width:1014px;height:1px;background:#d2d2d2"></div><div class="a" style="left:0;top:280.77px;width:1014px;height:1px;background:#d2d2d2"></div><div class="a" style="left:0;top:295.45px;width:1014px;height:1px;background:#d2d2d2"></div><div class="a" style="left:0;top:310.14px;width:1014px;height:1px;background:#d2d2d2"></div><div class="a" style="left:0;top:324.82px;width:1014px;height:1px;background:#d2d2d2"></div><div class="a" style="left:0;top:339.51px;width:1014px;height:1px;background:#d2d2d2"></div><div class="a" style="left:0;top:354.19px;width:1014px;height:1px;background:#d2d2d2"></div><div class="a" style="left:0;top:368.88px;width:1014px;height:1px;background:#d2d2d2"></div><div class="a" style="left:0;top:383.56px;width:1014px;height:1px;background:#d2d2d2"></div><div class="a" style="left:0;top:398.25px;width:1014px;height:1px;background:#d2d2d2"></div><div class="a" style="left:0;top:412.93px;width:1014px;height:1px;background:#d2d2d2"></div><div class="a" style="left:0;top:427.62px;width:1014px;height:1px;background:#d2d2d2"></div><div class="a" style="left:0;top:442.30px;width:1014px;height:1px;background:#d2d2d2"></div><div class="a" style="left:0;top:456.99px;width:1014px;height:1px;background:#d2d2d2"></div><div class="a" style="left:0;top:471.67px;width:1014px;height:1px;background:#d2d2d2"></div><div class="a" style="left:0;top:486.36px;width:1014px;height:1px;background:#d2d2d2"></div><div class="a" style="left:0;top:501.04px;width:1014px;height:1px;background:#d2d2d2"></div><div class="a" style="left:0;top:515.73px;width:1014px;height:1px;background:#d2d2d2"></div><div class="a" style="left:0;top:530.41px;width:1014px;height:1px;background:#d2d2d2"></div><div class="a" style="left:12px;top:251.7px;width:0.8px;height:282.3px;background:#d2d2d2"></div><div class="a" style="left:55.2px;top:251.7px;width:0.8px;height:282.3px;background:#d2d2d2"></div><div class="a" style="left:98.2px;top:251.7px;width:0.8px;height:282.3px;background:#d2d2d2"></div><div class="a" style="left:132.4px;top:251.7px;width:0.8px;height:282.3px;background:#d2d2d2"></div><div class="a" style="left:156.2px;top:251.7px;width:0.8px;height:282.3px;background:#d2d2d2"></div><div class="a" style="left:209.3px;top:251.7px;width:0.8px;height:282.3px;background:#d2d2d2"></div><div class="a" style="left:272.4px;top:251.7px;width:0.8px;height:282.3px;background:#d2d2d2"></div><div class="a" style="left:314.9px;top:251.7px;width:0.8px;height:282.3px;background:#d2d2d2"></div><div class="a" style="left:339.2px;top:251.7px;width:0.8px;height:282.3px;background:#d2d2d2"></div><div class="a" style="left:371.4px;top:251.7px;width:0.8px;height:282.3px;background:#d2d2d2"></div><div class="a" style="left:401.5px;top:251.7px;width:0.8px;height:282.3px;background:#d2d2d2"></div><div class="a" style="left:431.4px;top:251.7px;width:0.8px;height:282.3px;background:#d2d2d2"></div><div class="a" style="left:461.4px;top:251.7px;width:0.8px;height:282.3px;background:#d2d2d2"></div><div class="a" style="left:491.3px;top:251.7px;width:0.8px;height:282.3px;background:#a0a0a0"></div><div class="a" style="left:514.5px;top:251.7px;width:0.8px;height:282.3px;background:#d2d2d2"></div><div class="a" style="left:546.5px;top:251.7px;width:0.8px;height:282.3px;background:#d2d2d2"></div><div class="a" style="left:576.4px;top:251.7px;width:0.8px;height:282.3px;background:#a0a0a0"></div><div class="a" style="left:624.6px;top:251.7px;width:0.8px;height:282.3px;background:#b4b4b4"></div><div class="a" style="left:671.6px;top:251.7px;width:1.6px;height:282.3px;background:#d2d2d2"></div><div class="a" style="left:719.6px;top:251.7px;width:0.8px;height:282.3px;background:#d2d2d2"></div><div class="a" style="left:767.3px;top:251.7px;width:0.8px;height:282.3px;background:#d2d2d2"></div><div class="a" style="left:815.2px;top:251.7px;width:0.8px;height:282.3px;background:#d2d2d2"></div><div class="a" style="left:862.6px;top:251.7px;width:0.8px;height:282.3px;background:#d2d2d2"></div><div class="a" style="left:910.3px;top:251.7px;width:0.8px;height:282.3px;background:#d2d2d2"></div><div class="a" style="left:958.2px;top:251.7px;width:0.8px;height:282.3px;background:#d2d2d2"></div><div class="a" style="left:1006.2px;top:251.7px;width:0.8px;height:282.3px;background:#d2d2d2"></div><div class="a" style="left:491.8px;top:91px;width:0.9px;height:121px;background:#d0d0d0"></div><div class="a" style="left:958.2px;top:295.955px;width:48.4px;height:14.685px;border:1px solid #46709a"></div><div class="a" style="left:1005px;top:309.04px;width:2.4px;height:2.4px;background:#1f4e79"></div><div class="a" style="left:1014px;top:89px;width:10px;height:456px;background:#ebebeb"></div><div class="a" style="left:1017px;top:97px;width:4.6px;height:8.2px;background:#6e6e6e;border-radius:2.3px"></div><div class="a" style="left:0;top:534.2px;width:1014px;height:11px;background:#ebebeb"></div><div class="a" style="left:24.9px;top:537.5px;width:31.3px;height:4.2px;background:#6e6e6e;border-radius:2.1px"></div><div class="a" style="left:0;top:545.3px;width:1024px;height:10.7px;background:#efefef"></div><div class="t fit" style="left:3.9px;top:548.3px;font-size:6.2px;color:#333;transform:scaleX(0.7907);transform-origin:0 0;">ProMTO_4.0.3</div><div class="t" style="left:40.3px;top:548.3px;font-size:6.2px;color:#333;">|</div><div class="t fit" style="left:45px;top:548.3px;font-size:6.2px;color:#333;transform:scaleX(0.8006);transform-origin:0 0;">ProMTO_500_Server</div><div class="t" style="left:96.3px;top:548.3px;font-size:6.2px;color:#333;">|</div><div class="t fit" style="left:101.5px;top:548.3px;font-size:6.2px;color:#333;transform:scaleX(0.8642);transform-origin:0 0;">Ultimo aggiornamento del foglio: 14-Dec-21, 20:36</div><div class="t" style="left:225.8px;top:548.3px;font-size:6.2px;color:#333;">|</div><div class="t fit" style="left:230.6px;top:548.3px;font-size:6.2px;color:#333;transform:scaleX(0.8628);transform-origin:0 0;">Utente:  Veronica Freital</div><div class="t" style="left:294.2px;top:548.3px;font-size:6.2px;color:#333;">|</div><div class="t fit" style="left:299.7px;top:548.3px;font-size:6.2px;color:#333;transform:scaleX(0.8430);transform-origin:0 0;">Utenti online: 1</div><div class="t" style="left:338.4px;top:548.3px;font-size:6.2px;color:#333;">|</div><div class="t fit" style="left:343.5px;top:548.3px;font-size:6.2px;color:#333;transform:scaleX(0.8551);transform-origin:0 0;">Lingua: Italiano</div><div class="t" style="left:383.5px;top:548.3px;font-size:6.2px;color:#333;">|</div><div class="t fit" style="left:388.7px;top:548.3px;font-size:6.2px;color:#333;transform:scaleX(0.8384);transform-origin:0 0;">Set di dati: Demo</div><div class="t" style="left:432.7px;top:548.3px;font-size:6.2px;color:#333;">|</div><div class="t fit" style="left:437.8px;top:548.3px;font-size:6.2px;color:#333;transform:scaleX(0.8765);transform-origin:0 0;">Modo master: Off</div><div class="t" style="left:481.8px;top:548.3px;font-size:6.2px;color:#333;">|</div><div class="t fit" style="left:485.6px;top:548.3px;font-size:6.2px;color:#333;transform:scaleX(0.8250);transform-origin:0 0;">Conflitti di accesso: nessuno</div><div class="a" style="left:875.2px;top:545.6px;width:19.2px;height:10.4px;background:#dcdcdc"></div><svg style="left:880.8px;top:546.9px" width="7.7" height="6.7" viewBox="0 0 16 14"><path d="M1 1h14v12H1z M1 5h14 M1 9h14 M5.5 1v12 M10.5 1v12" fill="none" stroke="#555" stroke-width="1.4"/></svg><svg style="left:900.8px;top:546.9px" width="8" height="6.7" viewBox="0 0 16 14"><path d="M1 1h14v12H1z M4 3h8v8H4z" fill="none" stroke="#555" stroke-width="1.4"/></svg><svg style="left:920.9px;top:546.9px" width="7.6" height="6.7" viewBox="0 0 16 14"><path d="M1 1h14v12H1z M6 1v6h4V1" fill="none" stroke="#555" stroke-width="1.4"/></svg><div class="a" style="left:937.7px;top:550.2px;width:3.2px;height:0.6px;background:#777"></div><div class="a" style="left:944.1px;top:550.1px;width:48.8px;height:0.7px;background:#666"></div><div class="a" style="left:956.1px;top:546.9px;width:1.9px;height:6.7px;background:#555"></div><div class="a" style="left:968.4px;top:548.8px;width:0.6px;height:3px;background:#666"></div><svg style="left:0;top:0" width="1024" height="556"><path d="M995.8 550.4H999.7M997.75 548.5V552.3" stroke="#777" stroke-width="0.7"/></svg><div class="t fit" style="left:1005.7px;top:548.6px;font-size:6.0px;color:#444;transform:scaleX(0.8767);transform-origin:0 0;">55 %</div><svg style="left:0;top:0" width="1024" height="556"><path d="M1017 94.1L1021.6 94.1L1019.3 91.2Z" fill="#666"/><path d="M1017.6 528.4L1021.6 528.4L1019.6 531.3Z" fill="#5a5a5a"/><path d="M2.9 539.5L5.7 537.4L5.7 541.6Z" fill="#555"/><path d="M1008.5 537.4L1008.5 541.6L1012.1 539.5Z" fill="#555"/></svg><div class="a" style="left:349px;top:117.8px;width:407.9px;height:336.9px;background:#fdfdfd;border:0.8px solid #a9bdd0;box-shadow:1px 2px 4px rgba(0,0,0,0.18)"></div><div class="a" style="left:349px;top:117.8px;width:407.9px;height:14.2px;background:#0f4a7d"></div><div class="t fit" style="left:352.6px;top:122.9px;font-size:7.0px;color:#eef3f8;transform:scaleX(0.8238);transform-origin:0 0;">Impostazioni delle linee di business</div><svg style="left:745.8px;top:123px" width="4.6" height="4.6" viewBox="0 0 10 10"><path d="M1 1L9 9M9 1L1 9" stroke="#c9d6e3" stroke-width="1.2"/></svg><div class="a" style="left:370.6px;top:156.5px;width:364.6px;height:210.8px;border:0.8px solid #c6c6c6;border-right:none"></div><div class="a" style="left:374px;top:155px;width:38px;height:3px;background:#fdfdfd"></div><div class="t fit" style="left:375.9px;top:154.4px;font-size:5.6px;color:#222;transform:scaleX(0.9169);transform-origin:0 0;">Business Lines</div><div class="a" style="left:728.5px;top:157px;width:6.8px;height:210.3px;background:#f3f3f3;border-right:0.8px solid #9a9a9a"></div><div class="a" style="left:728.5px;top:157px;width:6.6px;height:6.5px;background:#f0f0f0;border:0.6px solid #9a9a9a"></div><svg style="left:728px;top:157px" width="8" height="212"><path d="M2.3 4.6H5.3L3.8 2.6Z M2.3 205.2H5.3L3.8 207.2Z" fill="#222"/></svg><div class="a" style="left:728.5px;top:163.5px;width:6.6px;height:141.2px;background:#e6e6e6;border-right:0.8px solid #a0a0a0;border-bottom:0.8px solid #a0a0a0"></div><div class="a" style="left:728.5px;top:360.7px;width:6.6px;height:6.4px;background:#f0f0f0;border:0.6px solid #9a9a9a"></div><div class="t fit" style="left:502px;top:164.5px;font-size:5.3px;color:#1e1e1e;transform:scaleX(0.9861);transform-origin:0 0;-webkit-text-stroke:0.12px #1e1e1e;">Consegna in tempo</div><div class="t fit" style="left:601.2px;top:164.3px;font-size:5.3px;color:#1e1e1e;transform:scaleX(0.9881);transform-origin:0 0;-webkit-text-stroke:0.12px #1e1e1e;">Consegna a margine</div><div class="t fit" style="left:437.9px;top:180.3px;font-size:5.3px;color:#1e1e1e;transform:scaleX(0.9759);transform-origin:0 0;-webkit-text-stroke:0.12px #1e1e1e;">Nome</div><div class="t fit" style="left:502px;top:180.5px;font-size:5.3px;color:#1e1e1e;transform:scaleX(1.0064);transform-origin:0 0;-webkit-text-stroke:0.12px #1e1e1e;">Verde (giorni)</div><div class="t fit" style="left:550.1px;top:180.5px;font-size:5.3px;color:#1e1e1e;transform:scaleX(1.0040);transform-origin:0 0;-webkit-text-stroke:0.12px #1e1e1e;">Rosso (giorni)</div><div class="t fit" style="left:601.2px;top:180.5px;font-size:5.3px;color:#1e1e1e;transform:scaleX(1.0255);transform-origin:0 0;-webkit-text-stroke:0.12px #1e1e1e;">Verde (Decimale-%, 0...1)</div><div class="t fit" style="left:672px;top:180.5px;font-size:5.3px;color:#1e1e1e;transform:scaleX(1.0045);transform-origin:0 0;-webkit-text-stroke:0.12px #1e1e1e;">Rosso (Decimale-%,</div><div class="t" style="left:672px;top:186.6px;font-size:5.3px;color:#1e1e1e;-webkit-text-stroke:0.12px #1e1e1e;">0...1)</div><div class="t fit" style="left:378.9px;top:200.70000000000002px;font-size:5.2px;color:#222;transform:scaleX(1.0058);transform-origin:0 0;-webkit-text-stroke:0.12px #222;">Business Line 1:</div><div class="a" style="left:438.3px;top:199.4px;width:51.30000000000001px;height:9.7px;background:#fcfcfc;border:0.7px solid #d2d2d2;border-bottom-color:#c2c2c2;border-radius:0.8px;box-shadow:0 0.6px 0.6px #dcdcdc"></div><div class="t" style="left:442.40000000000003px;top:201.4px;font-size:5.6px;color:#111;-webkit-text-stroke:0.12px #111;">Metal Strap</div><div class="a" style="left:502.4px;top:199.4px;width:38.10000000000002px;height:9.7px;background:#fcfcfc;border:0.7px solid #d2d2d2;border-bottom-color:#c2c2c2;border-radius:0.8px;box-shadow:0 0.6px 0.6px #dcdcdc"></div><div class="t" style="left:507.7px;top:201.4px;font-size:5.6px;color:#111;-webkit-text-stroke:0.12px #111;">1</div><div class="a" style="left:550.1px;top:199.4px;width:38.60000000000002px;height:9.7px;background:#fcfcfc;border:0.7px solid #d2d2d2;border-bottom-color:#c2c2c2;border-radius:0.8px;box-shadow:0 0.6px 0.6px #dcdcdc"></div><div class="t" style="left:554.9px;top:201.4px;font-size:5.6px;color:#111;-webkit-text-stroke:0.12px #111;">-5</div><div class="a" style="left:601.2px;top:199.4px;width:58.299999999999955px;height:9.7px;background:#fcfcfc;border:0.7px solid #d2d2d2;border-bottom-color:#c2c2c2;border-radius:0.8px;box-shadow:0 0.6px 0.6px #dcdcdc"></div><div class="t" style="left:606.2px;top:201.4px;font-size:5.6px;color:#111;-webkit-text-stroke:0.12px #111;">0,25</div><div class="a" style="left:672px;top:199.4px;width:51.299999999999955px;height:9.7px;background:#fcfcfc;border:0.7px solid #d2d2d2;border-bottom-color:#c2c2c2;border-radius:0.8px;box-shadow:0 0.6px 0.6px #dcdcdc"></div><div class="t" style="left:676.3px;top:201.4px;font-size:5.6px;color:#111;-webkit-text-stroke:0.12px #111;">0,15</div><div class="t fit" style="left:378.9px;top:211.91000000000003px;font-size:5.2px;color:#222;transform:scaleX(1.0058);transform-origin:0 0;-webkit-text-stroke:0.12px #222;">Business Line 2:</div><div class="a" style="left:438.3px;top:210.61px;width:51.30000000000001px;height:9.7px;background:#fcfcfc;border:0.7px solid #d2d2d2;border-bottom-color:#c2c2c2;border-radius:0.8px;box-shadow:0 0.6px 0.6px #dcdcdc"></div><div class="t" style="left:442.40000000000003px;top:212.61px;font-size:5.6px;color:#111;-webkit-text-stroke:0.12px #111;">Vacuum Shrink</div><div class="a" style="left:502.4px;top:210.61px;width:38.10000000000002px;height:9.7px;background:#fcfcfc;border:0.7px solid #d2d2d2;border-bottom-color:#c2c2c2;border-radius:0.8px;box-shadow:0 0.6px 0.6px #dcdcdc"></div><div class="t" style="left:507.7px;top:212.61px;font-size:5.6px;color:#111;-webkit-text-stroke:0.12px #111;">1</div><div class="a" style="left:550.1px;top:210.61px;width:38.60000000000002px;height:9.7px;background:#fcfcfc;border:0.7px solid #d2d2d2;border-bottom-color:#c2c2c2;border-radius:0.8px;box-shadow:0 0.6px 0.6px #dcdcdc"></div><div class="t" style="left:554.9px;top:212.61px;font-size:5.6px;color:#111;-webkit-text-stroke:0.12px #111;">-5</div><div class="a" style="left:601.2px;top:210.61px;width:58.299999999999955px;height:9.7px;background:#fcfcfc;border:0.7px solid #d2d2d2;border-bottom-color:#c2c2c2;border-radius:0.8px;box-shadow:0 0.6px 0.6px #dcdcdc"></div><div class="t" style="left:606.2px;top:212.61px;font-size:5.6px;color:#111;-webkit-text-stroke:0.12px #111;">0,23</div><div class="a" style="left:672px;top:210.61px;width:51.299999999999955px;height:9.7px;background:#fcfcfc;border:0.7px solid #d2d2d2;border-bottom-color:#c2c2c2;border-radius:0.8px;box-shadow:0 0.6px 0.6px #dcdcdc"></div><div class="t" style="left:676.3px;top:212.61px;font-size:5.6px;color:#111;-webkit-text-stroke:0.12px #111;">0,12</div><div class="t fit" style="left:378.9px;top:223.12px;font-size:5.2px;color:#222;transform:scaleX(1.0058);transform-origin:0 0;-webkit-text-stroke:0.12px #222;">Business Line 3:</div><div class="a" style="left:438.3px;top:221.82px;width:51.30000000000001px;height:9.7px;background:#fcfcfc;border:0.7px solid #d2d2d2;border-bottom-color:#c2c2c2;border-radius:0.8px;box-shadow:0 0.6px 0.6px #dcdcdc"></div><div class="a" style="left:502.4px;top:221.82px;width:38.10000000000002px;height:9.7px;background:#fcfcfc;border:0.7px solid #d2d2d2;border-bottom-color:#c2c2c2;border-radius:0.8px;box-shadow:0 0.6px 0.6px #dcdcdc"></div><div class="a" style="left:550.1px;top:221.82px;width:38.60000000000002px;height:9.7px;background:#fcfcfc;border:0.7px solid #d2d2d2;border-bottom-color:#c2c2c2;border-radius:0.8px;box-shadow:0 0.6px 0.6px #dcdcdc"></div><div class="a" style="left:601.2px;top:221.82px;width:58.299999999999955px;height:9.7px;background:#fcfcfc;border:0.7px solid #d2d2d2;border-bottom-color:#c2c2c2;border-radius:0.8px;box-shadow:0 0.6px 0.6px #dcdcdc"></div><div class="a" style="left:672px;top:221.82px;width:51.299999999999955px;height:9.7px;background:#fcfcfc;border:0.7px solid #d2d2d2;border-bottom-color:#c2c2c2;border-radius:0.8px;box-shadow:0 0.6px 0.6px #dcdcdc"></div><div class="t fit" style="left:378.9px;top:234.33px;font-size:5.2px;color:#222;transform:scaleX(1.0058);transform-origin:0 0;-webkit-text-stroke:0.12px #222;">Business Line 4:</div><div class="a" style="left:438.3px;top:233.03px;width:51.30000000000001px;height:9.7px;background:#fcfcfc;border:0.7px solid #d2d2d2;border-bottom-color:#c2c2c2;border-radius:0.8px;box-shadow:0 0.6px 0.6px #dcdcdc"></div><div class="a" style="left:502.4px;top:233.03px;width:38.10000000000002px;height:9.7px;background:#fcfcfc;border:0.7px solid #d2d2d2;border-bottom-color:#c2c2c2;border-radius:0.8px;box-shadow:0 0.6px 0.6px #dcdcdc"></div><div class="a" style="left:550.1px;top:233.03px;width:38.60000000000002px;height:9.7px;background:#fcfcfc;border:0.7px solid #d2d2d2;border-bottom-color:#c2c2c2;border-radius:0.8px;box-shadow:0 0.6px 0.6px #dcdcdc"></div><div class="a" style="left:601.2px;top:233.03px;width:58.299999999999955px;height:9.7px;background:#fcfcfc;border:0.7px solid #d2d2d2;border-bottom-color:#c2c2c2;border-radius:0.8px;box-shadow:0 0.6px 0.6px #dcdcdc"></div><div class="a" style="left:672px;top:233.03px;width:51.299999999999955px;height:9.7px;background:#fcfcfc;border:0.7px solid #d2d2d2;border-bottom-color:#c2c2c2;border-radius:0.8px;box-shadow:0 0.6px 0.6px #dcdcdc"></div><div class="t fit" style="left:378.9px;top:245.54000000000002px;font-size:5.2px;color:#222;transform:scaleX(1.0058);transform-origin:0 0;-webkit-text-stroke:0.12px #222;">Business Line 5:</div><div class="a" style="left:438.3px;top:244.24px;width:51.30000000000001px;height:9.7px;background:#fcfcfc;border:0.7px solid #d2d2d2;border-bottom-color:#c2c2c2;border-radius:0.8px;box-shadow:0 0.6px 0.6px #dcdcdc"></div><div class="a" style="left:502.4px;top:244.24px;width:38.10000000000002px;height:9.7px;background:#fcfcfc;border:0.7px solid #d2d2d2;border-bottom-color:#c2c2c2;border-radius:0.8px;box-shadow:0 0.6px 0.6px #dcdcdc"></div><div class="a" style="left:550.1px;top:244.24px;width:38.60000000000002px;height:9.7px;background:#fcfcfc;border:0.7px solid #d2d2d2;border-bottom-color:#c2c2c2;border-radius:0.8px;box-shadow:0 0.6px 0.6px #dcdcdc"></div><div class="a" style="left:601.2px;top:244.24px;width:58.299999999999955px;height:9.7px;background:#fcfcfc;border:0.7px solid #d2d2d2;border-bottom-color:#c2c2c2;border-radius:0.8px;box-shadow:0 0.6px 0.6px #dcdcdc"></div><div class="a" style="left:672px;top:244.24px;width:51.299999999999955px;height:9.7px;background:#fcfcfc;border:0.7px solid #d2d2d2;border-bottom-color:#c2c2c2;border-radius:0.8px;box-shadow:0 0.6px 0.6px #dcdcdc"></div><div class="t fit" style="left:378.9px;top:256.75px;font-size:5.2px;color:#222;transform:scaleX(1.0058);transform-origin:0 0;-webkit-text-stroke:0.12px #222;">Business Line 6:</div><div class="a" style="left:438.3px;top:255.45000000000002px;width:51.30000000000001px;height:9.7px;background:#fcfcfc;border:0.7px solid #d2d2d2;border-bottom-color:#c2c2c2;border-radius:0.8px;box-shadow:0 0.6px 0.6px #dcdcdc"></div><div class="a" style="left:502.4px;top:255.45000000000002px;width:38.10000000000002px;height:9.7px;background:#fcfcfc;border:0.7px solid #d2d2d2;border-bottom-color:#c2c2c2;border-radius:0.8px;box-shadow:0 0.6px 0.6px #dcdcdc"></div><div class="a" style="left:550.1px;top:255.45000000000002px;width:38.60000000000002px;height:9.7px;background:#fcfcfc;border:0.7px solid #d2d2d2;border-bottom-color:#c2c2c2;border-radius:0.8px;box-shadow:0 0.6px 0.6px #dcdcdc"></div><div class="a" style="left:601.2px;top:255.45000000000002px;width:58.299999999999955px;height:9.7px;background:#fcfcfc;border:0.7px solid #d2d2d2;border-bottom-color:#c2c2c2;border-radius:0.8px;box-shadow:0 0.6px 0.6px #dcdcdc"></div><div class="a" style="left:672px;top:255.45000000000002px;width:51.299999999999955px;height:9.7px;background:#fcfcfc;border:0.7px solid #d2d2d2;border-bottom-color:#c2c2c2;border-radius:0.8px;box-shadow:0 0.6px 0.6px #dcdcdc"></div><div class="t fit" style="left:378.9px;top:267.96000000000004px;font-size:5.2px;color:#222;transform:scaleX(1.0058);transform-origin:0 0;-webkit-text-stroke:0.12px #222;">Business Line 7:</div><div class="a" style="left:438.3px;top:266.66px;width:51.30000000000001px;height:9.7px;background:#fcfcfc;border:0.7px solid #d2d2d2;border-bottom-color:#c2c2c2;border-radius:0.8px;box-shadow:0 0.6px 0.6px #dcdcdc"></div><div class="a" style="left:502.4px;top:266.66px;width:38.10000000000002px;height:9.7px;background:#fcfcfc;border:0.7px solid #d2d2d2;border-bottom-color:#c2c2c2;border-radius:0.8px;box-shadow:0 0.6px 0.6px #dcdcdc"></div><div class="a" style="left:550.1px;top:266.66px;width:38.60000000000002px;height:9.7px;background:#fcfcfc;border:0.7px solid #d2d2d2;border-bottom-color:#c2c2c2;border-radius:0.8px;box-shadow:0 0.6px 0.6px #dcdcdc"></div><div class="a" style="left:601.2px;top:266.66px;width:58.299999999999955px;height:9.7px;background:#fcfcfc;border:0.7px solid #d2d2d2;border-bottom-color:#c2c2c2;border-radius:0.8px;box-shadow:0 0.6px 0.6px #dcdcdc"></div><div class="a" style="left:672px;top:266.66px;width:51.299999999999955px;height:9.7px;background:#fcfcfc;border:0.7px solid #d2d2d2;border-bottom-color:#c2c2c2;border-radius:0.8px;box-shadow:0 0.6px 0.6px #dcdcdc"></div><div class="t fit" style="left:378.9px;top:279.17px;font-size:5.2px;color:#222;transform:scaleX(1.0058);transform-origin:0 0;-webkit-text-stroke:0.12px #222;">Business Line 8:</div><div class="a" style="left:438.3px;top:277.87px;width:51.30000000000001px;height:9.7px;background:#fcfcfc;border:0.7px solid #d2d2d2;border-bottom-color:#c2c2c2;border-radius:0.8px;box-shadow:0 0.6px 0.6px #dcdcdc"></div><div class="a" style="left:502.4px;top:277.87px;width:38.10000000000002px;height:9.7px;background:#fcfcfc;border:0.7px solid #d2d2d2;border-bottom-color:#c2c2c2;border-radius:0.8px;box-shadow:0 0.6px 0.6px #dcdcdc"></div><div class="a" style="left:550.1px;top:277.87px;width:38.60000000000002px;height:9.7px;background:#fcfcfc;border:0.7px solid #d2d2d2;border-bottom-color:#c2c2c2;border-radius:0.8px;box-shadow:0 0.6px 0.6px #dcdcdc"></div><div class="a" style="left:601.2px;top:277.87px;width:58.299999999999955px;height:9.7px;background:#fcfcfc;border:0.7px solid #d2d2d2;border-bottom-color:#c2c2c2;border-radius:0.8px;box-shadow:0 0.6px 0.6px #dcdcdc"></div><div class="a" style="left:672px;top:277.87px;width:51.299999999999955px;height:9.7px;background:#fcfcfc;border:0.7px solid #d2d2d2;border-bottom-color:#c2c2c2;border-radius:0.8px;box-shadow:0 0.6px 0.6px #dcdcdc"></div><div class="t fit" style="left:378.9px;top:290.38000000000005px;font-size:5.2px;color:#222;transform:scaleX(1.0058);transform-origin:0 0;-webkit-text-stroke:0.12px #222;">Business Line 9:</div><div class="a" style="left:438.3px;top:289.08000000000004px;width:51.30000000000001px;height:9.7px;background:#fcfcfc;border:0.7px solid #d2d2d2;border-bottom-color:#c2c2c2;border-radius:0.8px;box-shadow:0 0.6px 0.6px #dcdcdc"></div><div class="a" style="left:502.4px;top:289.08000000000004px;width:38.10000000000002px;height:9.7px;background:#fcfcfc;border:0.7px solid #d2d2d2;border-bottom-color:#c2c2c2;border-radius:0.8px;box-shadow:0 0.6px 0.6px #dcdcdc"></div><div class="a" style="left:550.1px;top:289.08000000000004px;width:38.60000000000002px;height:9.7px;background:#fcfcfc;border:0.7px solid #d2d2d2;border-bottom-color:#c2c2c2;border-radius:0.8px;box-shadow:0 0.6px 0.6px #dcdcdc"></div><div class="a" style="left:601.2px;top:289.08000000000004px;width:58.299999999999955px;height:9.7px;background:#fcfcfc;border:0.7px solid #d2d2d2;border-bottom-color:#c2c2c2;border-radius:0.8px;box-shadow:0 0.6px 0.6px #dcdcdc"></div><div class="a" style="left:672px;top:289.08000000000004px;width:51.299999999999955px;height:9.7px;background:#fcfcfc;border:0.7px solid #d2d2d2;border-bottom-color:#c2c2c2;border-radius:0.8px;box-shadow:0 0.6px 0.6px #dcdcdc"></div><div class="t fit" style="left:378.9px;top:301.59000000000003px;font-size:5.2px;color:#222;transform:scaleX(0.9889);transform-origin:0 0;-webkit-text-stroke:0.12px #222;">Business Line 10:</div><div class="a" style="left:438.3px;top:300.29px;width:51.30000000000001px;height:9.7px;background:#fcfcfc;border:0.7px solid #d2d2d2;border-bottom-color:#c2c2c2;border-radius:0.8px;box-shadow:0 0.6px 0.6px #dcdcdc"></div><div class="a" style="left:502.4px;top:300.29px;width:38.10000000000002px;height:9.7px;background:#fcfcfc;border:0.7px solid #d2d2d2;border-bottom-color:#c2c2c2;border-radius:0.8px;box-shadow:0 0.6px 0.6px #dcdcdc"></div><div class="a" style="left:550.1px;top:300.29px;width:38.60000000000002px;height:9.7px;background:#fcfcfc;border:0.7px solid #d2d2d2;border-bottom-color:#c2c2c2;border-radius:0.8px;box-shadow:0 0.6px 0.6px #dcdcdc"></div><div class="a" style="left:601.2px;top:300.29px;width:58.299999999999955px;height:9.7px;background:#fcfcfc;border:0.7px solid #d2d2d2;border-bottom-color:#c2c2c2;border-radius:0.8px;box-shadow:0 0.6px 0.6px #dcdcdc"></div><div class="a" style="left:672px;top:300.29px;width:51.299999999999955px;height:9.7px;background:#fcfcfc;border:0.7px solid #d2d2d2;border-bottom-color:#c2c2c2;border-radius:0.8px;box-shadow:0 0.6px 0.6px #dcdcdc"></div><div class="t fit" style="left:378.9px;top:312.8px;font-size:5.2px;color:#222;transform:scaleX(0.9981);transform-origin:0 0;-webkit-text-stroke:0.12px #222;">Business Line 11:</div><div class="a" style="left:438.3px;top:311.5px;width:51.30000000000001px;height:9.7px;background:#fcfcfc;border:0.7px solid #d2d2d2;border-bottom-color:#c2c2c2;border-radius:0.8px;box-shadow:0 0.6px 0.6px #dcdcdc"></div><div class="a" style="left:502.4px;top:311.5px;width:38.10000000000002px;height:9.7px;background:#fcfcfc;border:0.7px solid #d2d2d2;border-bottom-color:#c2c2c2;border-radius:0.8px;box-shadow:0 0.6px 0.6px #dcdcdc"></div><div class="a" style="left:550.1px;top:311.5px;width:38.60000000000002px;height:9.7px;background:#fcfcfc;border:0.7px solid #d2d2d2;border-bottom-color:#c2c2c2;border-radius:0.8px;box-shadow:0 0.6px 0.6px #dcdcdc"></div><div class="a" style="left:601.2px;top:311.5px;width:58.299999999999955px;height:9.7px;background:#fcfcfc;border:0.7px solid #d2d2d2;border-bottom-color:#c2c2c2;border-radius:0.8px;box-shadow:0 0.6px 0.6px #dcdcdc"></div><div class="a" style="left:672px;top:311.5px;width:51.299999999999955px;height:9.7px;background:#fcfcfc;border:0.7px solid #d2d2d2;border-bottom-color:#c2c2c2;border-radius:0.8px;box-shadow:0 0.6px 0.6px #dcdcdc"></div><div class="t fit" style="left:378.9px;top:324.01000000000005px;font-size:5.2px;color:#222;transform:scaleX(0.9889);transform-origin:0 0;-webkit-text-stroke:0.12px #222;">Business Line 12:</div><div class="a" style="left:438.3px;top:322.71000000000004px;width:51.30000000000001px;height:9.7px;background:#fcfcfc;border:0.7px solid #d2d2d2;border-bottom-color:#c2c2c2;border-radius:0.8px;box-shadow:0 0.6px 0.6px #dcdcdc"></div><div class="a" style="left:502.4px;top:322.71000000000004px;width:38.10000000000002px;height:9.7px;background:#fcfcfc;border:0.7px solid #d2d2d2;border-bottom-color:#c2c2c2;border-radius:0.8px;box-shadow:0 0.6px 0.6px #dcdcdc"></div><div class="a" style="left:550.1px;top:322.71000000000004px;width:38.60000000000002px;height:9.7px;background:#fcfcfc;border:0.7px solid #d2d2d2;border-bottom-color:#c2c2c2;border-radius:0.8px;box-shadow:0 0.6px 0.6px #dcdcdc"></div><div class="a" style="left:601.2px;top:322.71000000000004px;width:58.299999999999955px;height:9.7px;background:#fcfcfc;border:0.7px solid #d2d2d2;border-bottom-color:#c2c2c2;border-radius:0.8px;box-shadow:0 0.6px 0.6px #dcdcdc"></div><div class="a" style="left:672px;top:322.71000000000004px;width:51.299999999999955px;height:9.7px;background:#fcfcfc;border:0.7px solid #d2d2d2;border-bottom-color:#c2c2c2;border-radius:0.8px;box-shadow:0 0.6px 0.6px #dcdcdc"></div><div class="t fit" style="left:378.9px;top:335.22px;font-size:5.2px;color:#222;transform:scaleX(0.9889);transform-origin:0 0;-webkit-text-stroke:0.12px #222;">Business Line 13:</div><div class="a" style="left:438.3px;top:333.92px;width:51.30000000000001px;height:9.7px;background:#fcfcfc;border:0.7px solid #d2d2d2;border-bottom-color:#c2c2c2;border-radius:0.8px;box-shadow:0 0.6px 0.6px #dcdcdc"></div><div class="a" style="left:502.4px;top:333.92px;width:38.10000000000002px;height:9.7px;background:#fcfcfc;border:0.7px solid #d2d2d2;border-bottom-color:#c2c2c2;border-radius:0.8px;box-shadow:0 0.6px 0.6px #dcdcdc"></div><div class="a" style="left:550.1px;top:333.92px;width:38.60000000000002px;height:9.7px;background:#fcfcfc;border:0.7px solid #d2d2d2;border-bottom-color:#c2c2c2;border-radius:0.8px;box-shadow:0 0.6px 0.6px #dcdcdc"></div><div class="a" style="left:601.2px;top:333.92px;width:58.299999999999955px;height:9.7px;background:#fcfcfc;border:0.7px solid #d2d2d2;border-bottom-color:#c2c2c2;border-radius:0.8px;box-shadow:0 0.6px 0.6px #dcdcdc"></div><div class="a" style="left:672px;top:333.92px;width:51.299999999999955px;height:9.7px;background:#fcfcfc;border:0.7px solid #d2d2d2;border-bottom-color:#c2c2c2;border-radius:0.8px;box-shadow:0 0.6px 0.6px #dcdcdc"></div><div class="t fit" style="left:378.9px;top:346.43px;font-size:5.2px;color:#222;transform:scaleX(0.9889);transform-origin:0 0;-webkit-text-stroke:0.12px #222;">Business Line 14:</div><div class="a" style="left:438.3px;top:345.13px;width:51.30000000000001px;height:9.7px;background:#fcfcfc;border:0.7px solid #d2d2d2;border-bottom-color:#c2c2c2;border-radius:0.8px;box-shadow:0 0.6px 0.6px #dcdcdc"></div><div class="a" style="left:502.4px;top:345.13px;width:38.10000000000002px;height:9.7px;background:#fcfcfc;border:0.7px solid #d2d2d2;border-bottom-color:#c2c2c2;border-radius:0.8px;box-shadow:0 0.6px 0.6px #dcdcdc"></div><div class="a" style="left:550.1px;top:345.13px;width:38.60000000000002px;height:9.7px;background:#fcfcfc;border:0.7px solid #d2d2d2;border-bottom-color:#c2c2c2;border-radius:0.8px;box-shadow:0 0.6px 0.6px #dcdcdc"></div><div class="a" style="left:601.2px;top:345.13px;width:58.299999999999955px;height:9.7px;background:#fcfcfc;border:0.7px solid #d2d2d2;border-bottom-color:#c2c2c2;border-radius:0.8px;box-shadow:0 0.6px 0.6px #dcdcdc"></div><div class="a" style="left:672px;top:345.13px;width:51.299999999999955px;height:9.7px;background:#fcfcfc;border:0.7px solid #d2d2d2;border-bottom-color:#c2c2c2;border-radius:0.8px;box-shadow:0 0.6px 0.6px #dcdcdc"></div><div class="t fit" style="left:378.9px;top:357.64000000000004px;font-size:5.2px;color:#222;transform:scaleX(0.9889);transform-origin:0 0;-webkit-text-stroke:0.12px #222;">Business Line 15:</div><div class="a" style="left:438.3px;top:356.34000000000003px;width:51.30000000000001px;height:9.7px;background:#fcfcfc;border:0.7px solid #d2d2d2;border-bottom-color:#c2c2c2;border-radius:0.8px;box-shadow:0 0.6px 0.6px #dcdcdc"></div><div class="a" style="left:502.4px;top:356.34000000000003px;width:38.10000000000002px;height:9.7px;background:#fcfcfc;border:0.7px solid #d2d2d2;border-bottom-color:#c2c2c2;border-radius:0.8px;box-shadow:0 0.6px 0.6px #dcdcdc"></div><div class="a" style="left:550.1px;top:356.34000000000003px;width:38.60000000000002px;height:9.7px;background:#fcfcfc;border:0.7px solid #d2d2d2;border-bottom-color:#c2c2c2;border-radius:0.8px;box-shadow:0 0.6px 0.6px #dcdcdc"></div><div class="a" style="left:601.2px;top:356.34000000000003px;width:58.299999999999955px;height:9.7px;background:#fcfcfc;border:0.7px solid #d2d2d2;border-bottom-color:#c2c2c2;border-radius:0.8px;box-shadow:0 0.6px 0.6px #dcdcdc"></div><div class="a" style="left:672px;top:356.34000000000003px;width:51.299999999999955px;height:9.7px;background:#fcfcfc;border:0.7px solid #d2d2d2;border-bottom-color:#c2c2c2;border-radius:0.8px;box-shadow:0 0.6px 0.6px #dcdcdc"></div><div class="a" style="left:370.4px;top:420.9px;width:107.4px;height:16.2px;background:#fdfdfd;border:0.7px solid #d0d0d0"></div><div class="t fit" style="left:385.3px;top:426.6px;font-size:5.6px;color:#222;transform:scaleX(0.9241);transform-origin:0 0;-webkit-text-stroke:0.1px #222;">Chiudi senza salvare le modifiche</div><div class="a" style="left:493.4px;top:420.9px;width:106.2px;height:16.2px;background:#0d3c6a"></div><div class="t fit" style="left:516.2px;top:426.6px;font-size:5.6px;color:#f4f4f4;transform:scaleX(0.9166);transform-origin:0 0;">Chiudi e salva le modifiche</div></body></html>
